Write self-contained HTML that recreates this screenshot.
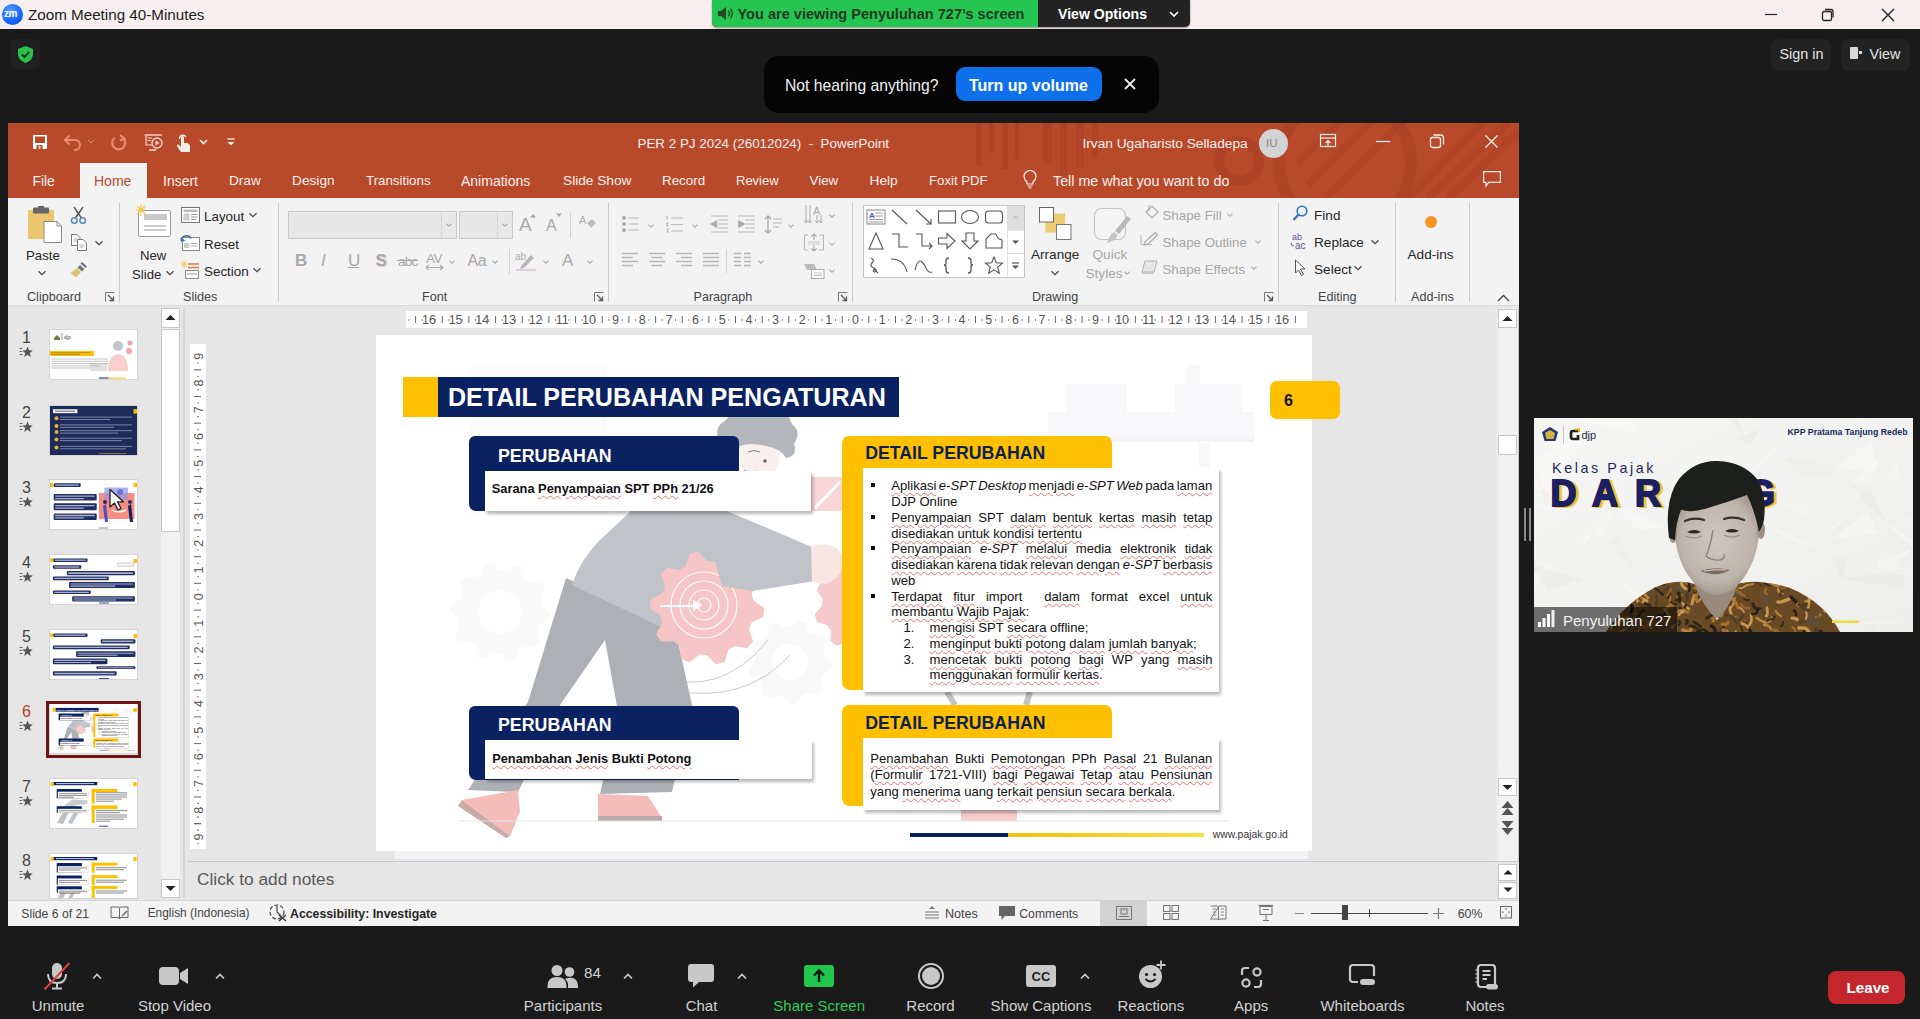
<!DOCTYPE html>
<html><head><meta charset="utf-8">
<style>
*{margin:0;padding:0;box-sizing:border-box}
html,body{width:1920px;height:1019px;overflow:hidden;background:#1a1a1a;font-family:"Liberation Sans",sans-serif}
.a{position:absolute}
.t{position:absolute;white-space:nowrap;line-height:1}
/* zoom title */
#ztitle{left:0;top:0;width:1920px;height:29px;background:#f7efef}
</style></head><body>
<div id="ztitle" class="a">
  <div class="a" style="left:2px;top:4px;width:21px;height:21px;border-radius:50%;background:radial-gradient(circle at 40% 30%,#4f9bff,#0b5cff 70%,#0a4fd6)"></div>
  <div class="t" style="left:4px;top:9px;font-size:10px;font-weight:bold;color:#fff;letter-spacing:-0.5px">zm</div>
  <div class="t" style="left:28px;top:7px;font-size:15.2px;color:#1b1b1b">Zoom Meeting 40-Minutes</div>
  <svg class="a" style="left:1760px;top:8px" width="22" height="14"><line x1="5" y1="6.5" x2="17" y2="6.5" stroke="#222" stroke-width="1.2"/></svg>
  <svg class="a" style="left:1820px;top:7px" width="16" height="16"><rect x="2.5" y="4.5" width="9" height="9" rx="1.5" fill="none" stroke="#222" stroke-width="1.3"/><path d="M5 2.5 h6 a2 2 0 0 1 2 2 v6" fill="none" stroke="#222" stroke-width="1.3"/></svg>
  <svg class="a" style="left:1880px;top:7px" width="16" height="16"><path d="M2 2 L14 14 M14 2 L2 14" stroke="#222" stroke-width="1.4"/></svg>
</div>
<div class="a" style="left:712px;top:0;width:478px;height:27px;border-radius:0 0 5px 5px;background:#232323;overflow:hidden;box-shadow:0 1px 2px rgba(0,0,0,.4)">
  <div class="a" style="left:0;top:0;width:326px;height:27px;background:#25c552"></div>
  <svg class="a" style="left:4px;top:5px" width="20" height="17"><path d="M2 6 h3 l5 -4 v13 l-5 -4 h-3z" fill="#204a1f"/><path d="M12.5 5.5 q2 3 0 6 M14.5 3.5 q3.5 5 0 10" fill="none" stroke="#204a1f" stroke-width="1.3"/></svg>
  <div class="t" style="left:25.5px;top:7px;font-size:14.55px;font-weight:bold;color:#1f3a1f">You are viewing Penyuluhan 727’s screen</div>
  <div class="t" style="left:346px;top:7px;font-size:14.1px;font-weight:bold;color:#fff">View Options</div>
  <svg class="a" style="left:456px;top:9px" width="12" height="10"><path d="M2 3 L6 7 L10 3" fill="none" stroke="#fff" stroke-width="1.6"/></svg>
</div>
<!-- shield -->
<div class="a" style="left:10px;top:39px;width:30px;height:30px;border-radius:6px;background:#202020"></div>
<svg class="a" style="left:16px;top:45px" width="19" height="19" viewBox="0 0 19 19"><path d="M9.5 1 L17 4 V9 C17 13.5 13.5 16.5 9.5 18 C5.5 16.5 2 13.5 2 9 V4 Z" fill="#2bc14e"/><path d="M5.8 9.5 L8.5 12 L13.2 6.8" fill="none" stroke="#0f3a17" stroke-width="2"/></svg>
<!-- sign in / view -->
<div class="a" style="left:1771px;top:39px;width:60px;height:32px;border-radius:7px;background:#222"></div>
<div class="t" style="left:1779.5px;top:47px;font-size:14.4px;color:#e6e6e6">Sign in</div>
<div class="a" style="left:1841px;top:39px;width:69px;height:32px;border-radius:7px;background:#222"></div>
<div class="a" style="left:1850px;top:47px;width:8px;height:12px;background:#d8d8d8;border-radius:1px"></div>
<div class="a" style="left:1859px;top:51px;width:3px;height:3px;background:#d8d8d8"></div>
<div class="t" style="left:1869.5px;top:47px;font-size:14.3px;color:#e6e6e6">View</div>
<!-- not hearing -->
<div class="a" style="left:764px;top:56px;width:395px;height:57px;border-radius:15px;background:#050505"></div>
<div class="t" style="left:785px;top:78px;font-size:15.7px;color:#f2f2f2">Not hearing anything?</div>
<div class="a" style="left:956px;top:67px;width:146px;height:34px;border-radius:9px;background:#0e71eb"></div>
<div class="t" style="left:969px;top:78px;font-size:16px;font-weight:bold;color:#fff">Turn up volume</div>
<svg class="a" style="left:1123px;top:77px" width="14" height="14"><path d="M2 2 L12 12 M12 2 L2 12" stroke="#eee" stroke-width="1.8"/></svg>

<!-- PPT window -->
<div class="a" style="left:8px;top:123px;width:1511px;height:803px;background:#e6e6e6"></div>
<div id="ptitle" class="a" style="left:8px;top:123px;width:1511px;height:75px;background:#b9492b;overflow:hidden">
<svg class="a" style="left:0;top:0" width="1511" height="75" viewBox="0 0 1511 75">
<g fill="#a83f24" opacity="0.5">
<rect x="968" y="0" width="6" height="42"/><rect x="981" y="0" width="5" height="30"/><rect x="994" y="0" width="6" height="46"/><rect x="1007" y="0" width="4" height="36"/>
<rect x="1035" y="0" width="9" height="40"/><rect x="1052" y="0" width="7" height="52"/><rect x="1068" y="0" width="8" height="44"/><rect x="1084" y="0" width="6" height="34"/>
</g>
<g fill="none" stroke="#a83f24" opacity="0.5">
<circle cx="1231" cy="38" r="20" stroke-width="10"/>
<circle cx="1337" cy="40" r="66" stroke-width="12"/>
</g>
<g stroke="#a83f24" opacity="0.4" stroke-width="8">
<path d="M1290 40 L1340 -10 M1300 62 L1372 -10 M1318 75 L1395 -2"/>
<path d="M1420 75 L1500 0 M1440 75 L1511 8 M1400 75 L1475 0"/>
</g>
</svg>

</div>
<div class="a" style="left:80px;top:163px;width:67px;height:35px;background:#f3f3f3"></div>
<!-- QAT -->
<svg class="a" style="left:32px;top:134px" width="16" height="16" viewBox="0 0 16 16"><rect x="1" y="1" width="14" height="14" rx="1" fill="#fff"/><rect x="3" y="2.5" width="10" height="6.5" fill="#b9492b"/><rect x="4.5" y="11" width="6" height="4" fill="#b9492b"/><rect x="6.5" y="11.5" width="2" height="3.5" fill="#f0c8b8"/></svg>
<svg class="a" style="left:63px;top:134px" width="36" height="18" viewBox="0 0 36 18"><path d="M3 6 H12 a5 5 0 0 1 0 10 H11" fill="none" stroke="#ec8a74" stroke-width="2"/><path d="M6.5 1.5 L2 6 L6.5 10.5" fill="none" stroke="#ec8a74" stroke-width="2"/><path d="M25 6 l3 3 l3 -3" fill="none" stroke="#e08a76" stroke-width="1"/></svg>
<svg class="a" style="left:110px;top:134px" width="18" height="18" viewBox="0 0 18 18"><path d="M13.5 4.5 A6.5 6.5 0 1 1 5 3.6" fill="none" stroke="#ec8a74" stroke-width="2.2"/><path d="M10 1 L14.5 4.5 L10 6.5" fill="none" stroke="#ec8a74" stroke-width="2"/></svg>
<svg class="a" style="left:144px;top:134px" width="20" height="18" viewBox="0 0 20 18"><path d="M0.5 1 H18" stroke="#f5d6cc" stroke-width="1.4"/><path d="M2 2 V11 H8" fill="none" stroke="#f5d6cc" stroke-width="1.2"/><path d="M3.5 4 H8 M3.5 6.5 H7" stroke="#f5d6cc" stroke-width="1"/><circle cx="13" cy="9" r="5" fill="none" stroke="#f5d6cc" stroke-width="1.3"/><path d="M11.5 6.5 L15.5 9 L11.5 11.5Z" fill="#f5d6cc"/><path d="M5 16 H12" stroke="#f5d6cc" stroke-width="1.6"/></svg>
<svg class="a" style="left:175px;top:133px" width="40" height="20" viewBox="0 0 40 20"><path d="M6 19 L2 13 Q1.5 11 3.5 11.5 L6 14 V5 Q6 3 7.5 3 Q9 3 9 5 V10 H12 Q15 10.5 15 13.5 V19Z" fill="#fbeee9"/><path d="M4.5 6 A3.5 3.5 0 0 1 11 4" fill="none" stroke="#fbeee9" stroke-width="1.3"/><path d="M25 7 l3.5 3.5 l3.5 -3.5" fill="none" stroke="#fbeee9" stroke-width="1.6"/></svg>
<svg class="a" style="left:226px;top:137px" width="10" height="10" viewBox="0 0 10 10"><path d="M1.5 2 H8.5" stroke="#fbeee9" stroke-width="1.3"/><path d="M1.5 5 L5 8.5 L8.5 5Z" fill="#fbeee9"/></svg>
<div class="t" style="left:637.5px;top:137px;font-size:13.4px;color:#fbf0ec;white-space:pre">PER 2 PJ 2024 (26012024)  -  PowerPoint</div>
<div class="t" style="left:1082.5px;top:137px;font-size:13.7px;color:#fbf0ec">Irvan Ugaharisto Selladepa</div>
<div class="a" style="left:1259px;top:129px;width:29px;height:29px;border-radius:50%;background:#d3d3d3"></div>
<div class="t" style="left:1266px;top:138px;font-size:11.5px;color:#8a8a8a">IU</div>
<svg class="a" style="left:1319px;top:133px" width="18" height="16" viewBox="0 0 18 16"><rect x="1.5" y="1.5" width="15" height="12" fill="none" stroke="#fbeee9" stroke-width="1.2"/><path d="M1.5 5 H16.5" stroke="#fbeee9" stroke-width="1.2"/><path d="M9 13 V7.5 M6.5 10 L9 7.5 L11.5 10" fill="none" stroke="#fbeee9" stroke-width="1.2"/></svg>
<svg class="a" style="left:1375px;top:135px" width="16" height="14"><path d="M1 6.5 H15" stroke="#fbeee9" stroke-width="1.3"/></svg>
<svg class="a" style="left:1429px;top:133px" width="16" height="16" viewBox="0 0 16 16"><rect x="1.5" y="4.5" width="10" height="10" rx="2" fill="none" stroke="#fbeee9" stroke-width="1.3"/><path d="M4.5 2 H11.5 a3 3 0 0 1 3 3 V11.5" fill="none" stroke="#fbeee9" stroke-width="1.3"/></svg>
<svg class="a" style="left:1484px;top:134px" width="15" height="15"><path d="M1.5 1.5 L13.5 13.5 M13.5 1.5 L1.5 13.5" stroke="#fbeee9" stroke-width="1.4"/></svg>
<!-- tabs -->
<div class="t" style="left:32.5px;top:174px;font-size:14px;color:#fbf0ec;letter-spacing:-0.1px">File</div>
<div class="t" style="left:94px;top:174px;font-size:14px;color:#b9492b">Home</div>
<div class="t" style="left:163px;top:174px;font-size:14px;color:#fbf0ec">Insert</div>
<div class="t" style="left:229px;top:174px;font-size:13.6px;color:#fbf0ec">Draw</div>
<div class="t" style="left:292px;top:174px;font-size:13.7px;color:#fbf0ec">Design</div>
<div class="t" style="left:366px;top:174px;font-size:13.3px;color:#fbf0ec">Transitions</div>
<div class="t" style="left:461px;top:174px;font-size:14px;color:#fbf0ec">Animations</div>
<div class="t" style="left:563px;top:174px;font-size:13.7px;color:#fbf0ec">Slide Show</div>
<div class="t" style="left:662px;top:174px;font-size:13.4px;color:#fbf0ec">Record</div>
<div class="t" style="left:736px;top:174px;font-size:13px;color:#fbf0ec">Review</div>
<div class="t" style="left:809.5px;top:174px;font-size:13.4px;color:#fbf0ec">View</div>
<div class="t" style="left:869.5px;top:174px;font-size:13.7px;color:#fbf0ec">Help</div>
<div class="t" style="left:929px;top:174px;font-size:13.2px;color:#fbf0ec">Foxit PDF</div>
<svg class="a" style="left:1022px;top:170px" width="16" height="20" viewBox="0 0 16 20"><path d="M5 14 V12 Q2 9.5 2 6.5 A6 6 0 0 1 14 6.5 Q14 9.5 11 12 V14 Z" fill="none" stroke="#fbeee9" stroke-width="1.2"/><path d="M5.5 16 H10.5 M6.5 18 H9.5" stroke="#fbeee9" stroke-width="1.2"/></svg>
<div class="t" style="left:1053px;top:174px;font-size:14.3px;color:#fbf0ec">Tell me what you want to do</div>
<svg class="a" style="left:1483px;top:171px" width="19" height="18" viewBox="0 0 19 18"><path d="M0.6 0.6 H17.4 V11.4 H5.5 L3 15 V11.4 H0.6Z" fill="none" stroke="#fbeee9" stroke-width="1.2"/></svg>

<div id="ribbon" class="a" style="left:8px;top:198px;width:1511px;height:108px;background:#f3f3f3;border-bottom:1px solid #dadada"></div>
<svg class="a" style="left:27px;top:206px;" width="36" height="38" viewBox="0 0 36 38"><rect x="1" y="4" width="26" height="29" fill="#ebc66f"/><rect x="6" y="1.5" width="16" height="6" rx="1" fill="#666"/><rect x="11" y="0" width="6" height="3" fill="#666"/><path d="M17 15.5 H30 L34.5 20 V36.5 H17Z" fill="#fff" stroke="#8a8a8a" stroke-width="1"/><path d="M30 15.5 V20 H34.5" fill="none" stroke="#8a8a8a" stroke-width="1"/></svg>
<div class="t" style="left:26.0px;top:248.8px;font-size:13.2px;color:#262626">Paste</div>
<svg class="a" style="left:36.5px;top:269px;" width="10" height="8" viewBox="0 0 10 8"><path d="M1.5 2.25 L5 5.75 L8.5 2.25" fill="none" stroke="#444" stroke-width="1.2"/></svg>
<svg class="a" style="left:70px;top:206px;" width="17" height="19" viewBox="0 0 17 19"><path d="M4 1 L11.5 12 M13 1 L5.5 12" stroke="#555" stroke-width="1.4"/><circle cx="4.3" cy="14.5" r="2.8" fill="none" stroke="#5b86c4" stroke-width="1.5"/><circle cx="12.7" cy="14.5" r="2.8" fill="none" stroke="#5b86c4" stroke-width="1.5"/></svg>
<svg class="a" style="left:70px;top:233px;" width="18" height="19" viewBox="0 0 18 19"><path d="M1.5 1.5 H7 L10 4.5 V12.5 H1.5Z" fill="#fff" stroke="#777" stroke-width="1"/><path d="M7.5 6.5 H13 L16.5 10 V17.5 H7.5Z" fill="#fff" stroke="#777" stroke-width="1"/><path d="M3.5 6 H7.5 M3.5 8 H7 M9.5 12 H14 M9.5 14 H14" stroke="#999" stroke-width=".8"/></svg>
<svg class="a" style="left:94px;top:239px;" width="10" height="8" viewBox="0 0 10 8"><path d="M1.5 2.25 L5 5.75 L8.5 2.25" fill="none" stroke="#444" stroke-width="1.2"/></svg>
<svg class="a" style="left:69px;top:260px;" width="20" height="19" viewBox="0 0 20 19"><path d="M13 2 L18 6.5 L16.5 8 L11.5 3.5Z" fill="#7a6a86"/><path d="M11 5 L15.5 9 L13 11.5 L8.5 7.5Z" fill="#777"/><path d="M8 8 L12 12 L7 17.5 L1.5 13Z" fill="#e0c26c"/></svg>
<div class="t" style="left:27.0px;top:291.0px;font-size:12.6px;color:#444">Clipboard</div>
<svg class="a" style="left:105px;top:292px;" width="10" height="10" viewBox="0 0 10 10"><path d="M0.5 0.5 H9.5 M0.5 0.5 V9.5" stroke="#777" stroke-width="1"/><path d="M3 3 L8.5 8.5 M4.5 8.5 H8.5 V4.5" fill="none" stroke="#555" stroke-width="1.3"/></svg>
<div class="a" style="left:119px;top:203px;width:1px;height:99px;background:#c9c9c9"></div>
<svg class="a" style="left:132px;top:204px;" width="42" height="34" viewBox="0 0 42 34"><rect x="6.5" y="6.5" width="32" height="26" rx="1.5" fill="#fff" stroke="#999" stroke-width="1"/><rect x="12" y="10" width="23" height="6" fill="#c8c8c8"/><path d="M12 22 H34 M12 26 H34" stroke="#9a9a9a" stroke-width="1"/><path d="M9 0.5 V12 M3.5 6 H14.5 M5 2 L13 10 M13 2 L5 10" stroke="#f2c84a" stroke-width="1.2"/></svg>
<div class="t" style="left:140.0px;top:248.8px;font-size:13.2px;color:#262626">New</div>
<div class="t" style="left:132.0px;top:267.8px;font-size:13.2px;color:#262626">Slide</div>
<svg class="a" style="left:165px;top:269px;" width="10" height="8" viewBox="0 0 10 8"><path d="M1.5 2.25 L5 5.75 L8.5 2.25" fill="none" stroke="#444" stroke-width="1.2"/></svg>
<svg class="a" style="left:181px;top:207px;" width="20" height="17" viewBox="0 0 20 17"><rect x="0.5" y="0.5" width="18" height="15" fill="#fff" stroke="#777" stroke-width="1"/><rect x="2.5" y="2.5" width="14" height="2.5" fill="#bbb"/><rect x="2.5" y="6.5" width="6" height="7" fill="#ccc"/><path d="M10 7.5 H16.5 M10 10 H16.5 M10 12.5 H15" stroke="#999" stroke-width="1"/></svg>
<div class="t" style="left:204.0px;top:209.7px;font-size:13.4px;color:#262626">Layout</div>
<svg class="a" style="left:248px;top:211px;" width="10" height="8" viewBox="0 0 10 8"><path d="M1.5 2.25 L5 5.75 L8.5 2.25" fill="none" stroke="#444" stroke-width="1.2"/></svg>
<svg class="a" style="left:180px;top:234px;" width="21" height="17" viewBox="0 0 21 17"><rect x="2.5" y="3.5" width="17" height="13" fill="#fff" stroke="#888" stroke-width="1"/><rect x="4" y="9" width="5" height="5" fill="#ccc"/><path d="M10.5 9.5 H17.5 M10.5 12 H17.5" stroke="#aaa" stroke-width="1"/><path d="M1.5 7 A5 4.5 0 0 1 11 4.5" fill="none" stroke="#3d6ab0" stroke-width="1.6"/><path d="M0.5 3.5 L1.5 8 L5.5 6.5Z" fill="#3d6ab0"/></svg>
<div class="t" style="left:204.0px;top:237.5px;font-size:13.4px;color:#262626">Reset</div>
<svg class="a" style="left:180px;top:260px;" width="21" height="20" viewBox="0 0 21 20"><path d="M4 0.5 V8 M0.5 4 H7.5 M1.5 1.5 L6.5 6.5 M6.5 1.5 L1.5 6.5" stroke="#f2c84a" stroke-width="1"/><path d="M8 4 H19 M8 7.5 H19" stroke="#e07a3a" stroke-width="1.3"/><rect x="5.5" y="10.5" width="13" height="8" fill="#fff" stroke="#888" stroke-width="1"/><path d="M7 14 H17" stroke="#999" stroke-width="1"/></svg>
<div class="t" style="left:204.0px;top:265.2px;font-size:13.4px;color:#262626">Section</div>
<svg class="a" style="left:252px;top:266px;" width="10" height="8" viewBox="0 0 10 8"><path d="M1.5 2.25 L5 5.75 L8.5 2.25" fill="none" stroke="#444" stroke-width="1.2"/></svg>
<div class="t" style="left:183.0px;top:291.0px;font-size:12.6px;color:#444">Slides</div>
<div class="a" style="left:278px;top:203px;width:1px;height:99px;background:#c9c9c9"></div>
<div class="a" style="left:288px;top:211px;width:169px;height:28px;background:#e8e8e8;border:1px solid #c8c8c8"></div>
<div class="a" style="left:441px;top:212px;width:1px;height:26px;background:#d6d6d6"></div>
<svg class="a" style="left:444px;top:221px;" width="10" height="8" viewBox="0 0 10 8"><path d="M2.5 2.75 L5 5.25 L7.5 2.75" fill="none" stroke="#b0b0b0" stroke-width="1.2"/></svg>
<div class="a" style="left:459px;top:211px;width:54px;height:28px;background:#e8e8e8;border:1px solid #c8c8c8"></div>
<div class="a" style="left:497px;top:212px;width:1px;height:26px;background:#d6d6d6"></div>
<svg class="a" style="left:500px;top:221px;" width="10" height="8" viewBox="0 0 10 8"><path d="M2.5 2.75 L5 5.25 L7.5 2.75" fill="none" stroke="#b0b0b0" stroke-width="1.2"/></svg>
<div class="t" style="left:519.0px;top:215.4px;font-size:19px;color:#a8a8a8">A</div>
<svg class="a" style="left:529px;top:213px;" width="8" height="5" viewBox="0 0 8 5"><path d="M1 4.5 L4 1 L7 4.5Z" fill="#a8a8a8"/></svg>
<div class="t" style="left:546.0px;top:218.0px;font-size:16px;color:#a8a8a8">A</div>
<svg class="a" style="left:555px;top:213px;" width="8" height="5" viewBox="0 0 8 5"><path d="M1 0.5 L4 4 L7 0.5Z" fill="#a8a8a8"/></svg>
<div class="a" style="left:570px;top:213px;width:1px;height:25px;background:#d0d0d0"></div>
<svg class="a" style="left:579px;top:214px;" width="18" height="17" viewBox="0 0 18 17"><text x="0" y="10" font-size="11" font-family="Liberation Sans" fill="#aaa">A</text><path d="M8 9 L13 5 L17 9 L12 14Z" fill="#bdbdbd"/></svg>
<div class="t" style="left:295.0px;top:251.6px;font-size:17px;color:#a8a8a8;font-weight:bold">B</div>
<div class="t" style="left:321.0px;top:251.6px;font-size:17px;color:#a8a8a8;font-style:italic">I</div>
<div class="t" style="left:348.0px;top:251.6px;font-size:17px;color:#a8a8a8">U</div>
<div class="a" style="left:348px;top:267px;width:11px;height:1.3px;background:#a8a8a8"></div>
<div class="t" style="left:375.5px;top:251.6px;font-size:17px;color:#a8a8a8;font-weight:bold;text-shadow:1px 1px 1px #ccc">S</div>
<div class="t" style="left:398.0px;top:254.6px;font-size:13.5px;color:#a8a8a8;letter-spacing:-0.8px">abc</div>
<div class="a" style="left:397px;top:260px;width:21px;height:1px;background:#a8a8a8"></div>
<div class="t" style="left:426.0px;top:251.6px;font-size:13.5px;color:#a8a8a8;letter-spacing:-0.5px">AV</div>
<svg class="a" style="left:425px;top:264px;" width="19" height="7" viewBox="0 0 19 7"><path d="M1 3.5 H18 M4 1 L1 3.5 L4 6 M15 1 L18 3.5 L15 6" fill="none" stroke="#a8a8a8" stroke-width="1.1"/></svg>
<svg class="a" style="left:447px;top:258px;" width="10" height="8" viewBox="0 0 10 8"><path d="M2.5 2.75 L5 5.25 L7.5 2.75" fill="none" stroke="#b0b0b0" stroke-width="1.1"/></svg>
<div class="t" style="left:467.5px;top:252.5px;font-size:16px;color:#a8a8a8;letter-spacing:-0.5px">Aa</div>
<svg class="a" style="left:490px;top:258px;" width="10" height="8" viewBox="0 0 10 8"><path d="M2.5 2.75 L5 5.25 L7.5 2.75" fill="none" stroke="#b0b0b0" stroke-width="1.1"/></svg>
<div class="a" style="left:509px;top:249px;width:1px;height:25px;background:#d0d0d0"></div>
<svg class="a" style="left:515px;top:251px;" width="23" height="20" viewBox="0 0 23 20"><text x="0" y="9" font-size="10" font-family="Liberation Sans" fill="#aaa">ab</text><path d="M6 15 L16 4 L19 7 L9 17 L5 18Z" fill="#b8b8b8"/><rect x="1" y="18" width="20" height="2" fill="#dcd0dc"/></svg>
<svg class="a" style="left:540.5px;top:258px;" width="10" height="8" viewBox="0 0 10 8"><path d="M2.5 2.75 L5 5.25 L7.5 2.75" fill="none" stroke="#b0b0b0" stroke-width="1.1"/></svg>
<div class="t" style="left:562.0px;top:251.6px;font-size:17px;color:#a8a8a8">A</div>
<svg class="a" style="left:585px;top:258px;" width="10" height="8" viewBox="0 0 10 8"><path d="M2.5 2.75 L5 5.25 L7.5 2.75" fill="none" stroke="#b0b0b0" stroke-width="1.1"/></svg>
<div class="t" style="left:422.0px;top:291.2px;font-size:12.6px;color:#444">Font</div>
<svg class="a" style="left:594px;top:292px;" width="10" height="10" viewBox="0 0 10 10"><path d="M0.5 0.5 H9.5 M0.5 0.5 V9.5" stroke="#777" stroke-width="1"/><path d="M3 3 L8.5 8.5 M4.5 8.5 H8.5 V4.5" fill="none" stroke="#555" stroke-width="1.3"/></svg>
<div class="a" style="left:608px;top:203px;width:1px;height:99px;background:#c9c9c9"></div>
<svg class="a" style="left:621px;top:215px;" width="20" height="18" viewBox="0 0 20 18"><circle cx="3" cy="3" r="2" fill="#aaa"/><circle cx="3" cy="9" r="2" fill="#aaa"/><circle cx="3" cy="15" r="2" fill="#aaa"/><path d="M7 3 H18 M7 9 H18 M7 15 H18" stroke="#b8b8b8" stroke-width="1.2"/></svg>
<svg class="a" style="left:646px;top:221.5px;" width="10" height="8" viewBox="0 0 10 8"><path d="M2.5 2.75 L5 5.25 L7.5 2.75" fill="none" stroke="#b0b0b0" stroke-width="1.1"/></svg>
<svg class="a" style="left:665px;top:215px;" width="20" height="18" viewBox="0 0 20 18"><path d="M2 1 V5 M1.5 8 H3 L1.5 11 H3.5 M1.5 14 H3.5 L2 15.5 L3.5 17 H1.5" fill="none" stroke="#aaa" stroke-width="1"/><path d="M6 3 H18 M6 9.5 H18 M6 16 H18" stroke="#b8b8b8" stroke-width="1.2"/></svg>
<svg class="a" style="left:690px;top:221.5px;" width="10" height="8" viewBox="0 0 10 8"><path d="M2.5 2.75 L5 5.25 L7.5 2.75" fill="none" stroke="#b0b0b0" stroke-width="1.1"/></svg>
<svg class="a" style="left:710px;top:215px;" width="19" height="18" viewBox="0 0 19 18"><path d="M1 1 H18 M8 5 H18 M8 9 H18 M8 13 H18 M1 17 H18" stroke="#b8b8b8" stroke-width="1.2"/><path d="M6.5 6 L1.5 9 L6.5 12Z M3 9 H7" fill="#aaa" stroke="#aaa" stroke-width="1.4"/></svg>
<svg class="a" style="left:737px;top:215px;" width="19" height="18" viewBox="0 0 19 18"><path d="M1 1 H18 M8 5 H18 M8 9 H18 M8 13 H18 M1 17 H18" stroke="#b8b8b8" stroke-width="1.2"/><path d="M2 6 L7 9 L2 12Z M1 9 H5" fill="#aaa" stroke="#aaa" stroke-width="1.4"/></svg>
<svg class="a" style="left:764px;top:215px;" width="19" height="19" viewBox="0 0 19 19"><path d="M4 1 V18 M1 4 L4 1 L7 4 M1 15 L4 18 L7 15" fill="none" stroke="#aaa" stroke-width="1.3"/><path d="M9 4 H18 M9 8 H18 M9 12 H15" stroke="#b8b8b8" stroke-width="1.2"/></svg>
<svg class="a" style="left:786px;top:221.5px;" width="10" height="8" viewBox="0 0 10 8"><path d="M2.5 2.75 L5 5.25 L7.5 2.75" fill="none" stroke="#b0b0b0" stroke-width="1.1"/></svg>
<svg class="a" style="left:804px;top:205px;" width="21" height="20" viewBox="0 0 21 20"><text x="9" y="10" font-size="11" font-family="Liberation Sans" fill="#aaa">A</text><path d="M2 0 V18 M0 15.5 L2 18 L4 15.5 M6 0 V18 M4 15.5 L6 18 L8 15.5 M13 10 V18 M11 15.5 L13 18 L15 15.5 M17 10 V18 M15 15.5 L17 18 L19 15.5" fill="none" stroke="#aaa" stroke-width="1"/></svg>
<svg class="a" style="left:827px;top:211.7px;" width="10" height="8" viewBox="0 0 10 8"><path d="M2.5 2.75 L5 5.25 L7.5 2.75" fill="none" stroke="#b0b0b0" stroke-width="1.1"/></svg>
<svg class="a" style="left:804px;top:233px;" width="21" height="20" viewBox="0 0 21 20"><path d="M0.5 2 H4 M15 2 H19.5 V17 H15 M4 17 H0.5 V2" fill="none" stroke="#b4b4b4" stroke-width="1"/><path d="M10 1 V7 M7.5 3.5 L10 1 L12.5 3.5 M10 18 V12 M7.5 15.5 L10 18 L12.5 15.5" fill="none" stroke="#aaa" stroke-width="1.1"/><path d="M4 9 H16 M4 11 H16" stroke="#c8c8c8" stroke-width="1"/></svg>
<svg class="a" style="left:827px;top:239.8px;" width="10" height="8" viewBox="0 0 10 8"><path d="M2.5 2.75 L5 5.25 L7.5 2.75" fill="none" stroke="#b0b0b0" stroke-width="1.1"/></svg>
<svg class="a" style="left:804px;top:263px;" width="21" height="16" viewBox="0 0 21 16"><path d="M0 1 H10 L13 7 L3 7 Z" fill="#bbb"/><rect x="7.5" y="6.5" width="12.5" height="9" fill="#fff" stroke="#aaa" stroke-width="1"/><path d="M10 10 H18 M10 12.5 H18" stroke="#bbb" stroke-width="1"/></svg>
<svg class="a" style="left:827px;top:267px;" width="10" height="8" viewBox="0 0 10 8"><path d="M2.5 2.75 L5 5.25 L7.5 2.75" fill="none" stroke="#b0b0b0" stroke-width="1.1"/></svg>
<svg class="a" style="left:622px;top:252px;" width="17" height="16" viewBox="0 0 17 16"><path d="M0 1.5 H16" stroke="#b4b4b4" stroke-width="1.4"/><path d="M0 5.5 H11" stroke="#b4b4b4" stroke-width="1.4"/><path d="M0 9.5 H16" stroke="#b4b4b4" stroke-width="1.4"/><path d="M0 13.5 H11" stroke="#b4b4b4" stroke-width="1.4"/></svg>
<svg class="a" style="left:649px;top:252px;" width="17" height="16" viewBox="0 0 17 16"><path d="M0.0 1.5 H16.0" stroke="#b4b4b4" stroke-width="1.4"/><path d="M2.5 5.5 H13.5" stroke="#b4b4b4" stroke-width="1.4"/><path d="M0.0 9.5 H16.0" stroke="#b4b4b4" stroke-width="1.4"/><path d="M2.5 13.5 H13.5" stroke="#b4b4b4" stroke-width="1.4"/></svg>
<svg class="a" style="left:676px;top:252px;" width="17" height="16" viewBox="0 0 17 16"><path d="M0 1.5 H16" stroke="#b4b4b4" stroke-width="1.4"/><path d="M5 5.5 H16" stroke="#b4b4b4" stroke-width="1.4"/><path d="M0 9.5 H16" stroke="#b4b4b4" stroke-width="1.4"/><path d="M5 13.5 H16" stroke="#b4b4b4" stroke-width="1.4"/></svg>
<svg class="a" style="left:703px;top:252px;" width="17" height="16" viewBox="0 0 17 16"><path d="M0 1.5 H16" stroke="#b4b4b4" stroke-width="1.4"/><path d="M0 5.5 H16" stroke="#b4b4b4" stroke-width="1.4"/><path d="M0 9.5 H16" stroke="#b4b4b4" stroke-width="1.4"/><path d="M0 13.5 H16" stroke="#b4b4b4" stroke-width="1.4"/></svg>
<div class="a" style="left:726px;top:249px;width:1px;height:24px;background:#d0d0d0"></div>
<svg class="a" style="left:734px;top:252px;" width="17" height="16" viewBox="0 0 17 16"><path d="M0 1.5 H7 M10 1.5 H17" stroke="#b4b4b4" stroke-width="1.3"/><path d="M0 5.5 H7 M10 5.5 H17" stroke="#b4b4b4" stroke-width="1.3"/><path d="M0 9.5 H7 M10 9.5 H17" stroke="#b4b4b4" stroke-width="1.3"/><path d="M0 13.5 H7 M10 13.5 H17" stroke="#b4b4b4" stroke-width="1.3"/></svg>
<svg class="a" style="left:755.5px;top:257.5px;" width="10" height="8" viewBox="0 0 10 8"><path d="M2.5 2.75 L5 5.25 L7.5 2.75" fill="none" stroke="#b0b0b0" stroke-width="1.1"/></svg>
<div class="t" style="left:693.5px;top:290.8px;font-size:12.6px;color:#444">Paragraph</div>
<svg class="a" style="left:838px;top:292px;" width="10" height="10" viewBox="0 0 10 10"><path d="M0.5 0.5 H9.5 M0.5 0.5 V9.5" stroke="#777" stroke-width="1"/><path d="M3 3 L8.5 8.5 M4.5 8.5 H8.5 V4.5" fill="none" stroke="#555" stroke-width="1.3"/></svg>
<div class="a" style="left:852px;top:203px;width:1px;height:99px;background:#c9c9c9"></div>
<div class="a" style="left:863px;top:205px;width:162px;height:73px;background:#fff;border:1px solid #c6c6c6"></div>
<div class="a" style="left:1007px;top:206px;width:17px;height:25px;background:#dedede"></div>
<div class="a" style="left:1007px;top:206px;width:1px;height:71px;background:#e0e0e0"></div>
<div class="a" style="left:1008px;top:253px;width:16px;height:1px;background:#e0e0e0"></div>
<div class="a" style="left:1008px;top:230px;width:16px;height:1px;background:#e6e6e6"></div>
<svg class="a" style="left:1011px;top:214px;" width="9" height="5" viewBox="0 0 9 5"><path d="M1 4.5 L4.5 1 L8 4.5Z" fill="#c8c8c8"/></svg>
<svg class="a" style="left:1011px;top:240px;" width="9" height="5" viewBox="0 0 9 5"><path d="M1 0.5 L4.5 4 L8 0.5Z" fill="#555"/></svg>
<svg class="a" style="left:1011px;top:262px;" width="9" height="8" viewBox="0 0 9 8"><path d="M1 1 H8" stroke="#555" stroke-width="1.2"/><path d="M1 3.5 L4.5 7 L8 3.5Z" fill="#555"/></svg>
<svg class="a" style="left:866px;top:208px;" width="20" height="18" viewBox="0 0 20 18"><rect x="1" y="2" width="18" height="14" fill="#fff" stroke="#888" stroke-width="1"/><text x="3" y="10" font-size="8" font-weight="bold" font-family="Liberation Sans" fill="#3d5ea8">A</text><path d="M9 5 H17 M9 8 H17 M3 11.5 H17 M3 14 H17" stroke="#999" stroke-width=".9"/></svg>
<svg class="a" style="left:890px;top:208px;" width="20" height="18" viewBox="0 0 20 18"><path d="M2 2 L17 16" stroke="#555" stroke-width="1.1"/></svg>
<svg class="a" style="left:914px;top:208px;" width="20" height="18" viewBox="0 0 20 18"><path d="M2 2 L17 16" stroke="#555" stroke-width="1.1"/><path d="M17 11 V16 H12" fill="none" stroke="#555" stroke-width="1.1"/></svg>
<svg class="a" style="left:937px;top:208px;" width="20" height="18" viewBox="0 0 20 18"><rect x="1.5" y="3" width="17" height="12" fill="none" stroke="#555" stroke-width="1.1"/></svg>
<svg class="a" style="left:960px;top:208px;" width="20" height="18" viewBox="0 0 20 18"><ellipse cx="10" cy="9" rx="8.5" ry="6.5" fill="none" stroke="#555" stroke-width="1.1"/></svg>
<svg class="a" style="left:984px;top:208px;" width="20" height="18" viewBox="0 0 20 18"><rect x="1.5" y="3" width="17" height="12" rx="3" fill="none" stroke="#555" stroke-width="1.1"/></svg>
<svg class="a" style="left:866px;top:232px;" width="20" height="18" viewBox="0 0 20 18"><path d="M10 1 L17 17 H3Z" fill="none" stroke="#555" stroke-width="1.1"/></svg>
<svg class="a" style="left:890px;top:232px;" width="20" height="18" viewBox="0 0 20 18"><path d="M2 2 H9 V15 H18" fill="none" stroke="#555" stroke-width="1.1"/></svg>
<svg class="a" style="left:914px;top:232px;" width="20" height="18" viewBox="0 0 20 18"><path d="M2 2 H8 V14 H18 M15 11 L18 14 L15 17" fill="none" stroke="#555" stroke-width="1.1"/></svg>
<svg class="a" style="left:937px;top:232px;" width="20" height="18" viewBox="0 0 20 18"><path d="M1.5 6 H10 V1.5 L18 9 L10 16.5 V12 H1.5Z" fill="none" stroke="#555" stroke-width="1.1"/></svg>
<svg class="a" style="left:960px;top:232px;" width="20" height="18" viewBox="0 0 20 18"><path d="M6 1 H14 V9 H18 L10 17 L2 9 H6Z" fill="none" stroke="#555" stroke-width="1.1"/></svg>
<svg class="a" style="left:984px;top:232px;" width="20" height="18" viewBox="0 0 20 18"><path d="M2 16 V7 L7 2 H12 Q13 7 18 8 V16Z" fill="none" stroke="#555" stroke-width="1.1"/></svg>
<svg class="a" style="left:866px;top:256px;" width="20" height="18" viewBox="0 0 20 18"><path d="M5 2 Q9 4 6 7 Q3 10 8 12 Q12 14 9 16 Q6 16 8 13 L12 17" fill="none" stroke="#555" stroke-width="1.1"/></svg>
<svg class="a" style="left:890px;top:256px;" width="20" height="18" viewBox="0 0 20 18"><path d="M1 3 Q14 3 17 16" fill="none" stroke="#555" stroke-width="1.1"/></svg>
<svg class="a" style="left:914px;top:256px;" width="20" height="18" viewBox="0 0 20 18"><path d="M1 14 Q4 2 8 6 Q11 9 13 14 Q15 17 18 16" fill="none" stroke="#555" stroke-width="1.1"/></svg>
<svg class="a" style="left:937px;top:256px;" width="20" height="18" viewBox="0 0 20 18"><path d="M12 2 Q9 2 9 5 V8 Q9 9 7 9 Q9 9 9 11 V14 Q9 17 12 17" fill="none" stroke="#555" stroke-width="1.3"/></svg>
<svg class="a" style="left:960px;top:256px;" width="20" height="18" viewBox="0 0 20 18"><path d="M8 2 Q11 2 11 5 V8 Q11 9 13 9 Q11 9 11 11 V14 Q11 17 8 17" fill="none" stroke="#555" stroke-width="1.3"/></svg>
<svg class="a" style="left:984px;top:256px;" width="20" height="18" viewBox="0 0 20 18"><path d="M10 1 L12.3 6.8 L18.5 7.2 L13.7 11.1 L15.3 17.2 L10 13.8 L4.7 17.2 L6.3 11.1 L1.5 7.2 L7.7 6.8Z" fill="none" stroke="#555" stroke-width="1.1"/></svg>
<svg class="a" style="left:1038px;top:206px;" width="34" height="35" viewBox="0 0 34 35"><rect x="7.3" y="7.5" width="19.7" height="19" fill="#eccb72"/><rect x="1.5" y="1.5" width="14" height="14.5" fill="#fff" stroke="#666" stroke-width="1"/><rect x="18.5" y="18.5" width="14.5" height="15" fill="#fff" stroke="#777" stroke-width="1"/></svg>
<div class="t" style="left:1031.0px;top:247.9px;font-size:13.6px;color:#262626">Arrange</div>
<svg class="a" style="left:1050px;top:268.6px;" width="10" height="8" viewBox="0 0 10 8"><path d="M1.5 2.25 L5 5.75 L8.5 2.25" fill="none" stroke="#444" stroke-width="1.2"/></svg>
<svg class="a" style="left:1093px;top:207px;" width="40" height="38" viewBox="0 0 40 38"><rect x="1.5" y="1.5" width="31" height="31" rx="7" fill="#f4f4f4" stroke="#c4c4c4" stroke-width="1.1"/><path d="M38 12 L34 9 L22 24 L26 27Z" fill="#b8b8b8"/><path d="M21 25 Q16 28 14 36 Q22 34 25 28Z" fill="#c4c4c4"/></svg>
<div class="t" style="left:1092.5px;top:247.9px;font-size:13.6px;color:#a6a6a6">Quick</div>
<div class="t" style="left:1085.5px;top:266.9px;font-size:13.6px;color:#a6a6a6">Styles</div>
<svg class="a" style="left:1122px;top:269px;" width="10" height="8" viewBox="0 0 10 8"><path d="M2.5 2.75 L5 5.25 L7.5 2.75" fill="none" stroke="#b0b0b0" stroke-width="1.1"/></svg>
<svg class="a" style="left:1143px;top:204px;" width="16" height="17" viewBox="0 0 16 17"><path d="M3 8 L9 2 L15 8 L9 14Z" fill="none" stroke="#aaa" stroke-width="1.2"/><path d="M6 1 V7" stroke="#aaa" stroke-width="1"/></svg>
<div class="t" style="left:1162.5px;top:209.1px;font-size:13.3px;color:#a6a6a6">Shape Fill</div>
<svg class="a" style="left:1224.5px;top:211.3px;" width="10" height="8" viewBox="0 0 10 8"><path d="M2.5 2.75 L5 5.25 L7.5 2.75" fill="none" stroke="#b0b0b0" stroke-width="1.1"/></svg>
<svg class="a" style="left:1140px;top:231px;" width="19" height="15" viewBox="0 0 19 15"><path d="M1 4 V13.5 H12" fill="none" stroke="#b0b0b0" stroke-width="1"/><path d="M5 11 L15 1.5 L17.5 4 L7.5 13.5 L4.5 14Z" fill="none" stroke="#aaa" stroke-width="1.2"/></svg>
<div class="t" style="left:1162.5px;top:235.9px;font-size:13.3px;color:#a6a6a6">Shape Outline</div>
<svg class="a" style="left:1253px;top:238px;" width="10" height="8" viewBox="0 0 10 8"><path d="M2.5 2.75 L5 5.25 L7.5 2.75" fill="none" stroke="#b0b0b0" stroke-width="1.1"/></svg>
<svg class="a" style="left:1140px;top:259px;" width="19" height="17" viewBox="0 0 19 17"><path d="M5 2 H17 L14 13 H2Z" fill="#e6e6e6" stroke="#b0b0b0" stroke-width="1"/><path d="M2 13 L1 15 H13 L14 13" fill="#c8c8c8"/></svg>
<div class="t" style="left:1162.5px;top:262.5px;font-size:13.3px;color:#a6a6a6">Shape Effects</div>
<svg class="a" style="left:1249px;top:264px;" width="10" height="8" viewBox="0 0 10 8"><path d="M2.5 2.75 L5 5.25 L7.5 2.75" fill="none" stroke="#b0b0b0" stroke-width="1.1"/></svg>
<div class="t" style="left:1032.0px;top:290.6px;font-size:12.6px;color:#444">Drawing</div>
<svg class="a" style="left:1264px;top:292px;" width="10" height="10" viewBox="0 0 10 10"><path d="M0.5 0.5 H9.5 M0.5 0.5 V9.5" stroke="#777" stroke-width="1"/><path d="M3 3 L8.5 8.5 M4.5 8.5 H8.5 V4.5" fill="none" stroke="#555" stroke-width="1.3"/></svg>
<div class="a" style="left:1278px;top:203px;width:1px;height:99px;background:#c9c9c9"></div>
<svg class="a" style="left:1292px;top:205px;" width="16" height="17" viewBox="0 0 16 17"><circle cx="10" cy="6" r="4.8" fill="none" stroke="#2f6fc4" stroke-width="1.6"/><path d="M6.5 9.5 L1.5 15" stroke="#2f6fc4" stroke-width="2.2"/></svg>
<div class="t" style="left:1314.0px;top:209.3px;font-size:13.6px;color:#262626">Find</div>
<svg class="a" style="left:1290px;top:232px;" width="20" height="18" viewBox="0 0 20 18"><text x="2" y="8" font-size="9" font-family="Liberation Sans" fill="#6a4f94">ab</text><text x="5" y="17" font-size="10" font-family="Liberation Sans" fill="#6a4f94">ac</text><path d="M1 11 Q1 14 4 14" fill="none" stroke="#2f6fc4" stroke-width="1"/></svg>
<div class="t" style="left:1314.0px;top:235.7px;font-size:13.6px;color:#262626">Replace</div>
<svg class="a" style="left:1370px;top:238px;" width="10" height="8" viewBox="0 0 10 8"><path d="M1.5 2.25 L5 5.75 L8.5 2.25" fill="none" stroke="#444" stroke-width="1.2"/></svg>
<svg class="a" style="left:1294px;top:259px;" width="13" height="18" viewBox="0 0 13 18"><path d="M1.5 1 V14 L4.5 11 L7.5 16.5 L9.5 15.5 L6.5 10 H11Z" fill="#fff" stroke="#555" stroke-width="1"/></svg>
<div class="t" style="left:1314.0px;top:262.7px;font-size:13.6px;color:#262626">Select</div>
<svg class="a" style="left:1352.5px;top:264px;" width="10" height="8" viewBox="0 0 10 8"><path d="M1.5 2.25 L5 5.75 L8.5 2.25" fill="none" stroke="#444" stroke-width="1.2"/></svg>
<div class="t" style="left:1318.0px;top:290.9px;font-size:12.6px;color:#444">Editing</div>
<div class="a" style="left:1395px;top:203px;width:1px;height:99px;background:#c9c9c9"></div>
<div class="a" style="left:1425px;top:216px;width:12px;height:12px;border-radius:50%;background:#f7941d"></div>
<div class="t" style="left:1407.5px;top:247.9px;font-size:13.6px;color:#262626">Add-ins</div>
<div class="t" style="left:1411.0px;top:290.9px;font-size:12.6px;color:#444">Add-ins</div>
<div class="a" style="left:1469px;top:203px;width:1px;height:99px;background:#c9c9c9"></div>
<svg class="a" style="left:1497px;top:294px;" width="13" height="8" viewBox="0 0 13 8"><path d="M1 7 L6.5 1.5 L12 7" fill="none" stroke="#444" stroke-width="1.3"/></svg>
<!-- content -->
<div class="a" style="left:161px;top:308px;width:19px;height:590px;background:#f0f0f0"></div>
<div class="a" style="left:161px;top:308px;width:19px;height:20px;background:#fff;border:1px solid #c6c6c6"></div>
<svg class="a" style="left:165px;top:314px;" width="11" height="7" viewBox="0 0 11 7"><path d="M0.5 6 L5.5 1 L10.5 6Z" fill="#222"/></svg>
<div class="a" style="left:161px;top:329px;width:19px;height:203px;background:#fff;border:1px solid #c6c6c6"></div>
<div class="a" style="left:161px;top:879px;width:19px;height:19px;background:#fff;border:1px solid #c6c6c6"></div>
<svg class="a" style="left:165px;top:885px;" width="11" height="7" viewBox="0 0 11 7"><path d="M0.5 1 L5.5 6 L10.5 1Z" fill="#222"/></svg>
<div class="a" style="left:183px;top:308px;width:2px;height:590px;background:#d6d6d6"></div>
<div class="t" style="left:22.0px;top:330.0px;font-size:16px;color:#444">1</div>
<svg class="a" style="left:19px;top:346px;" width="14" height="12" viewBox="0 0 14 12"><path d="M8.5 0.5 L10 4.3 L13.8 4.5 L10.8 7 L11.8 11 L8.5 8.8 L5.2 11 L6.2 7 L3.2 4.5 L7 4.3Z" fill="#555"/><path d="M0.5 2.5 H3.5 M0.5 5.5 H3 M0.5 8.5 H3.5" stroke="#666" stroke-width="1"/></svg>
<div class="t" style="left:22.0px;top:405.0px;font-size:16px;color:#444">2</div>
<svg class="a" style="left:19px;top:421px;" width="14" height="12" viewBox="0 0 14 12"><path d="M8.5 0.5 L10 4.3 L13.8 4.5 L10.8 7 L11.8 11 L8.5 8.8 L5.2 11 L6.2 7 L3.2 4.5 L7 4.3Z" fill="#555"/><path d="M0.5 2.5 H3.5 M0.5 5.5 H3 M0.5 8.5 H3.5" stroke="#666" stroke-width="1"/></svg>
<div class="t" style="left:22.0px;top:480.0px;font-size:16px;color:#444">3</div>
<svg class="a" style="left:19px;top:496px;" width="14" height="12" viewBox="0 0 14 12"><path d="M8.5 0.5 L10 4.3 L13.8 4.5 L10.8 7 L11.8 11 L8.5 8.8 L5.2 11 L6.2 7 L3.2 4.5 L7 4.3Z" fill="#555"/><path d="M0.5 2.5 H3.5 M0.5 5.5 H3 M0.5 8.5 H3.5" stroke="#666" stroke-width="1"/></svg>
<div class="t" style="left:22.0px;top:554.5px;font-size:16px;color:#444">4</div>
<svg class="a" style="left:19px;top:571px;" width="14" height="12" viewBox="0 0 14 12"><path d="M8.5 0.5 L10 4.3 L13.8 4.5 L10.8 7 L11.8 11 L8.5 8.8 L5.2 11 L6.2 7 L3.2 4.5 L7 4.3Z" fill="#555"/><path d="M0.5 2.5 H3.5 M0.5 5.5 H3 M0.5 8.5 H3.5" stroke="#666" stroke-width="1"/></svg>
<div class="t" style="left:22.0px;top:629.0px;font-size:16px;color:#444">5</div>
<svg class="a" style="left:19px;top:645px;" width="14" height="12" viewBox="0 0 14 12"><path d="M8.5 0.5 L10 4.3 L13.8 4.5 L10.8 7 L11.8 11 L8.5 8.8 L5.2 11 L6.2 7 L3.2 4.5 L7 4.3Z" fill="#555"/><path d="M0.5 2.5 H3.5 M0.5 5.5 H3 M0.5 8.5 H3.5" stroke="#666" stroke-width="1"/></svg>
<div class="t" style="left:22.0px;top:703.5px;font-size:16px;color:#c0392b">6</div>
<svg class="a" style="left:19px;top:720px;" width="14" height="12" viewBox="0 0 14 12"><path d="M8.5 0.5 L10 4.3 L13.8 4.5 L10.8 7 L11.8 11 L8.5 8.8 L5.2 11 L6.2 7 L3.2 4.5 L7 4.3Z" fill="#555"/><path d="M0.5 2.5 H3.5 M0.5 5.5 H3 M0.5 8.5 H3.5" stroke="#666" stroke-width="1"/></svg>
<div class="t" style="left:22.0px;top:778.5px;font-size:16px;color:#444">7</div>
<svg class="a" style="left:19px;top:795px;" width="14" height="12" viewBox="0 0 14 12"><path d="M8.5 0.5 L10 4.3 L13.8 4.5 L10.8 7 L11.8 11 L8.5 8.8 L5.2 11 L6.2 7 L3.2 4.5 L7 4.3Z" fill="#555"/><path d="M0.5 2.5 H3.5 M0.5 5.5 H3 M0.5 8.5 H3.5" stroke="#666" stroke-width="1"/></svg>
<div class="t" style="left:22.0px;top:853.0px;font-size:16px;color:#444">8</div>
<svg class="a" style="left:19px;top:869px;" width="14" height="12" viewBox="0 0 14 12"><path d="M8.5 0.5 L10 4.3 L13.8 4.5 L10.8 7 L11.8 11 L8.5 8.8 L5.2 11 L6.2 7 L3.2 4.5 L7 4.3Z" fill="#555"/><path d="M0.5 2.5 H3.5 M0.5 5.5 H3 M0.5 8.5 H3.5" stroke="#666" stroke-width="1"/></svg>
<div class="a" style="left:50px;top:330px;width:87px;height:49px;overflow:hidden;box-shadow:0 0 0 1px #d4d4d4"><svg width="87" height="49" viewBox="0 0 87 49" preserveAspectRatio="none"><rect width="87" height="49" fill="#fff"/><path d="M4 8 L7 5 L10 8 V10 H4Z" fill="#6b7a4a"/><path d="M12 3 V10" stroke="#555" stroke-width=".6"/><text x="14" y="9" font-size="5" font-family="Liberation Sans" fill="#445">djp</text><rect x="0" y="21" width="44" height="5" fill="#fec000"/><path d="M1 22.7 H40 M1 24.5 H30" stroke="#8a6a10" stroke-width=".6"/><path d="M1.5 29 H58 M1.5 31.3 H58 M1.5 33.6 H58 M1.5 35.9 H50 M1.5 38 H40" stroke="#9a9a9a" stroke-width=".6"/><circle cx="68" cy="16" r="5" fill="#9aa0a8" opacity=".6"/><path d="M58 41 Q58 25 68 24 Q78 25 78 41Z" fill="#f3b0a8" opacity=".6"/><circle cx="80" cy="13" r="2.5" fill="#e66" opacity=".6"/><circle cx="79" cy="21" r="3" fill="#e66" opacity=".6"/><rect x="40" y="33" width="17" height="8" fill="#bbb" opacity=".45"/><path d="M49 48 H58.5" stroke="#0b2262" stroke-width="1"/><path d="M58.5 48 H76" stroke="#fec000" stroke-width="1"/></svg></div>
<div class="a" style="left:50px;top:406px;width:87px;height:49px;overflow:hidden;box-shadow:0 0 0 1px #d4d4d4"><svg width="87" height="49" viewBox="0 0 87 49" preserveAspectRatio="none"><rect width="87" height="49" fill="#1c2b5a"/><rect x="3" y="3.2" width="24.4" height="4" fill="#f4f4f4"/><path d="M5 5.2 H25" stroke="#445" stroke-width=".8"/><rect x="83.5" y="3.2" width="3.5" height="4.3" fill="#fec000"/><circle cx="6.5" cy="12.3" r="2" fill="#e7b43a"/><path d="M10 11.100000000000001 H82 M10 13.5 H60" stroke="#c9cde0" stroke-width=".7" opacity=".8"/><circle cx="6.5" cy="20.1" r="2" fill="#e7b43a"/><path d="M10 18.900000000000002 H82 M10 21.3 H64" stroke="#c9cde0" stroke-width=".7" opacity=".8"/><circle cx="6.5" cy="25.9" r="2" fill="#e7b43a"/><path d="M10 24.7 H82 M10 27.099999999999998 H68" stroke="#c9cde0" stroke-width=".7" opacity=".8"/><circle cx="6.5" cy="33.4" r="2" fill="#e7b43a"/><path d="M10 32.199999999999996 H82 M10 34.6 H72" stroke="#c9cde0" stroke-width=".7" opacity=".8"/><circle cx="6.5" cy="41.6" r="2" fill="#e7b43a"/><path d="M10 40.4 H82 M10 42.800000000000004 H76" stroke="#c9cde0" stroke-width=".7" opacity=".8"/><path d="M49 47.5 H76" stroke="#8a8f50" stroke-width=".8"/></svg></div>
<div class="a" style="left:50px;top:480px;width:87px;height:49px;overflow:hidden;box-shadow:0 0 0 1px #d4d4d4"><svg width="87" height="49" viewBox="0 0 87 49" preserveAspectRatio="none"><rect width="87" height="49" fill="#fff"/><rect x="0" y="3" width="3" height="4" fill="#fec000"/><rect x="3.7" y="3.2" width="27" height="3.7" rx="1" fill="#1f2d66"/><path d="M5.2 5.1 H28.7" stroke="#d8dcea" stroke-width="1.33" opacity=".75"/><rect x="83.5" y="3" width="3.5" height="4" fill="#fec000"/><rect x="3.7" y="14" width="43" height="6.5" rx="1" fill="#1f2d66"/><path d="M5.2 16.1 H44.7 M5.2 18.6 H33.8" stroke="#d8dcea" stroke-width="1.30" opacity=".75"/><rect x="3.7" y="23.3" width="43" height="6.9" rx="1" fill="#1f2d66"/><path d="M5.2 25.6 H44.7 M5.2 28.1 H33.8" stroke="#d8dcea" stroke-width="1.38" opacity=".75"/><rect x="3.7" y="33.4" width="43" height="6.5" rx="1" fill="#1f2d66"/><path d="M5.2 35.5 H44.7 M5.2 37.9 H33.8" stroke="#d8dcea" stroke-width="1.30" opacity=".75"/><rect x="49" y="13" width="35.5" height="26" fill="#f37a6a" opacity=".85"/><rect x="54.4" y="7.5" width="23.6" height="12" rx="1" fill="#8e98e6" opacity=".75"/><circle cx="70" cy="12" r="3" fill="#5a66d0" opacity=".8"/><path d="M62 30 Q68 34 76 30" stroke="#fff" stroke-width="1.4" fill="none"/><path d="M53 26 L56 24 L58 42 L55 42Z" fill="#4a4fc0"/><circle cx="55" cy="22" r="2" fill="#2a2a60"/><path d="M78 26 L81 24 L83 42 L80 42Z" fill="#0b2262"/><circle cx="80" cy="22" r="2" fill="#2a2a60"/><path d="M49 48 H58" stroke="#777" stroke-width=".8"/></svg></div>
<div class="a" style="left:50px;top:555px;width:87px;height:49px;overflow:hidden;box-shadow:0 0 0 1px #d4d4d4"><svg width="87" height="49" viewBox="0 0 87 49" preserveAspectRatio="none"><rect width="87" height="49" fill="#fff"/><rect x="0" y="3.4" width="3.3" height="3.7" fill="#fec000"/><rect x="3.3" y="3.4" width="34.2" height="3.7" rx="1" fill="#1f2d66"/><path d="M4.8 5.2 H35.5" stroke="#d8dcea" stroke-width="1.33" opacity=".75"/><rect x="83.6" y="4" width="3.4" height="4" fill="#fec000"/><rect x="67.7" y="8.1" width="16" height="2.9" rx="1" fill="#fff" stroke="#888" stroke-width=".5"/><rect x="2.9" y="10.2" width="28.4" height="3.6" rx="1" fill="#1f2d66"/><path d="M4.4 12.0 H29.299999999999997" stroke="#d8dcea" stroke-width="1.30" opacity=".75"/><rect x="16.8" y="15.9" width="68.1" height="4.3" rx="1" fill="#1f2d66"/><path d="M18.3 18.1 H82.89999999999999" stroke="#d8dcea" stroke-width="1.55" opacity=".75"/><rect x="2.9" y="21.6" width="55.9" height="3.6" rx="1" fill="#1f2d66"/><path d="M4.4 23.4 H56.8" stroke="#d8dcea" stroke-width="1.30" opacity=".75"/><rect x="19" y="27" width="65.9" height="6" rx="1" fill="#1f2d66"/><path d="M20.5 29.0 H82.9 M20.5 31.2 H65.1" stroke="#d8dcea" stroke-width="1.20" opacity=".75"/><rect x="2.9" y="35.6" width="37.8" height="3.4" rx="1" fill="#1f2d66"/><path d="M4.4 37.3 H38.699999999999996" stroke="#d8dcea" stroke-width="1.22" opacity=".75"/><rect x="22.2" y="41.3" width="62.7" height="5.2" rx="1" fill="#1f2d66"/><path d="M23.7 43.0 H82.9 M23.7 44.9 H66.1" stroke="#d8dcea" stroke-width="1.04" opacity=".75"/><path d="M1 14.7 H40 M1 26.2 H60 M1 34.3 H84 M1 40.2 H84" stroke="#f0d890" stroke-width=".4"/><path d="M49 48 H59" stroke="#0b2262" stroke-width=".8"/></svg></div>
<div class="a" style="left:50px;top:630px;width:87px;height:49px;overflow:hidden;box-shadow:0 0 0 1px #d4d4d4"><svg width="87" height="49" viewBox="0 0 87 49" preserveAspectRatio="none"><rect width="87" height="49" fill="#fff"/><rect x="0" y="3.4" width="3.3" height="3.7" fill="#fec000"/><rect x="3.3" y="3.4" width="34.2" height="3.7" rx="1" fill="#1f2d66"/><path d="M4.8 5.2 H35.5" stroke="#d8dcea" stroke-width="1.33" opacity=".75"/><rect x="83.6" y="4" width="3.4" height="4" fill="#fec000"/><rect x="50.7" y="9.2" width="34.7" height="4.3" rx="1" fill="#1f2d66"/><path d="M52.2 11.3 H83.4" stroke="#d8dcea" stroke-width="1.55" opacity=".75"/><rect x="2.9" y="15.6" width="76.8" height="3.6" rx="1" fill="#1f2d66"/><path d="M4.4 17.4 H77.7" stroke="#d8dcea" stroke-width="1.30" opacity=".75"/><rect x="26.1" y="21.3" width="59.3" height="5.7" rx="1" fill="#1f2d66"/><path d="M27.6 23.2 H83.4 M27.6 25.3 H67.6" stroke="#d8dcea" stroke-width="1.14" opacity=".75"/><rect x="2.9" y="28.5" width="54.5" height="5.7" rx="1" fill="#1f2d66"/><path d="M4.4 30.4 H55.4 M4.4 32.5 H41.0" stroke="#d8dcea" stroke-width="1.14" opacity=".75"/><rect x="46.4" y="36.3" width="39" height="2.8" rx="1" fill="#1f2d66"/><path d="M47.9 37.7 H83.4" stroke="#d8dcea" stroke-width="1.01" opacity=".75"/><rect x="2.9" y="41.3" width="63.7" height="4.2" rx="1" fill="#1f2d66"/><path d="M4.4 43.4 H64.60000000000001" stroke="#d8dcea" stroke-width="1.51" opacity=".75"/><path d="M49 48.5 H59" stroke="#0b2262" stroke-width=".8"/></svg></div>
<div class="a" style="left:50px;top:704px;width:87px;height:49px;overflow:hidden;box-shadow:0 0 0 1px #d4d4d4"><svg width="87" height="49" viewBox="0 0 87 49" preserveAspectRatio="none"></svg></div>
<div class="a" style="left:50px;top:704px;width:87px;height:49px;overflow:hidden;background:#fff;box-shadow:0 0 0 1px #d4d4d4"><div class="a" style="left:0;top:0;width:1920px;height:1019px;transform-origin:0 0;transform:translate(-34.949px,-31.138px) scale(0.09295)"><div class="a" style="left:376px;top:335px;width:936px;height:516px;background:#fff"></div>
<svg class="a" style="left:0;top:0" width="1920" height="1019" viewBox="0 0 1920 1019"><defs><clipPath id="sc6"><rect x="376" y="335" width="936" height="516"/></clipPath></defs><g clip-path="url(#sc6)"><g fill="#f8f8fa"><rect x="1048" y="412" width="206" height="30"/><rect x="1067" y="384" width="60" height="28"/><rect x="1175" y="384" width="67" height="58"/><rect x="1187" y="365" width="13" height="19"/><rect x="1199" y="443" width="11" height="24"/><rect x="470" y="365" width="137" height="150" fill="#fbfbfc"/></g><path d="M1048 439 H1254" stroke="#f3f3f5" stroke-width="5"/><polygon points="550.0,612.0 549.4,619.8 539.9,625.0 537.4,631.1 540.5,641.4 535.4,647.4 524.7,646.0 519.1,649.4 515.5,659.6 507.8,661.4 500.0,654.0 493.4,653.5 484.5,659.6 477.3,656.6 475.3,646.0 470.3,641.7 459.5,641.4 455.4,634.7 460.1,625.0 458.5,618.6 450.0,612.0 450.6,604.2 460.1,599.0 462.6,592.9 459.5,582.6 464.6,576.6 475.3,578.0 480.9,574.6 484.5,564.4 492.2,562.6 500.0,570.0 506.6,570.5 515.5,564.4 522.7,567.4 524.7,578.0 529.7,582.3 540.5,582.6 544.6,589.3 539.9,599.0 541.5,605.4" fill="#fafafb" opacity="1"/><circle cx="500" cy="612" r="22" fill="#fff"/><polygon points="832.0,662.0 831.4,669.3 822.9,674.0 820.3,679.5 822.2,689.0 817.0,694.2 807.5,692.3 802.0,694.9 797.3,703.4 790.0,704.0 783.9,696.5 778.0,694.9 769.0,698.4 763.0,694.2 763.2,684.5 759.7,679.5 750.5,676.4 748.6,669.3 755.0,662.0 755.5,655.9 750.5,647.6 753.6,641.0 763.2,639.5 767.5,635.2 769.0,625.6 775.6,622.5 783.9,627.5 790.0,627.0 797.3,620.6 804.4,622.5 807.5,631.7 812.5,635.2 822.2,635.0 826.4,641.0 822.9,650.0 824.5,655.9" fill="#f9f9fa" opacity="1"/><circle cx="790" cy="662" r="18" fill="#fff"/><polygon points="906.0,606.0 905.3,614.0 895.7,619.0 892.9,625.0 895.2,635.6 889.6,641.2 879.0,638.9 873.0,641.7 868.0,651.3 860.0,652.0 853.4,643.4 847.0,641.7 837.0,645.8 830.4,641.2 830.9,630.4 827.1,625.0 816.8,621.7 814.7,614.0 822.0,606.0 822.6,599.4 816.8,590.3 820.2,583.0 830.9,581.6 835.6,576.9 837.0,566.2 844.3,562.8 853.4,568.6 860.0,568.0 868.0,560.7 875.7,562.8 879.0,573.1 884.4,576.9 895.2,576.4 899.8,583.0 895.7,593.0 897.4,599.4" fill="#f6caca" opacity="1"/><g fill="none" stroke="#c9c9cc" stroke-width="1"><path d="M652 675 Q720 700 768 640"/><path d="M668 690 Q745 705 790 655"/></g><path d="M566 578 L675 628 L692 705 L672 792 L600 794 L618 712 L605 640 L560 705 L518 792 L468 790 L528 702 Z" fill="#adb1b6"/><path d="M572 585 Q580 560 600 540 L631 511 L727 511 L748 590 L690 612 L672 632 Z" fill="#c0c4c8"/><polygon points="764.0,608.0 763.3,616.9 751.7,622.5 748.9,629.3 753.1,641.5 747.3,648.3 734.6,646.0 728.3,649.9 724.6,662.2 715.9,664.3 707.0,655.0 699.6,654.4 689.4,662.2 681.1,658.8 679.4,646.0 673.8,641.2 660.9,641.5 656.2,633.9 662.3,622.5 660.6,615.4 650.0,608.0 650.7,599.1 662.3,593.5 665.1,586.7 660.9,574.5 666.7,567.7 679.4,570.0 685.7,566.1 689.4,553.8 698.1,551.7 707.0,561.0 714.4,561.6 724.6,553.8 732.9,557.2 734.6,570.0 740.2,574.8 753.1,574.5 757.8,582.1 751.7,593.5 753.4,600.6" fill="#f6c6c6" opacity="1"/><g fill="none" stroke="#fff" stroke-width="1.2" opacity=".95"><circle cx="704" cy="605" r="7"/><circle cx="704" cy="605" r="15"/><circle cx="704" cy="605" r="24"/><circle cx="704" cy="605" r="33"/></g><path d="M660 606 H700" stroke="#fff" stroke-width="2.2"/><path d="M693 600 L703 605 L693 611Z" fill="#fff"/><path d="M700 511 L727 511 L812 547 L815 581 L752 591 L722 586 Z" fill="#c0c4c8"/><path d="M811 546 Q836 540 842 556 Q846 576 826 584 L812 582 Z" fill="#f9e6e2"/><path d="M738 444 Q758 436 778 446 Q782 466 772 474 Q750 478 740 466 Z" fill="#f9efec"/><path d="M720 442 Q712 428 726 420 Q732 410 748 414 Q760 406 772 414 Q788 410 792 424 Q802 432 794 444 Q798 456 786 458 Q780 448 766 446 Q750 442 740 446 Q736 462 726 456 Q714 452 720 442Z" fill="#b3b7bc"/><path d="M748 452 Q754 449 760 452" stroke="#777" stroke-width="1" fill="none"/><circle cx="765" cy="461" r="1.8" fill="#666"/><path d="M744 470 Q750 474 756 471" stroke="#999" stroke-width="1" fill="none"/><path d="M462 800 L518 790 L520 812 L510 836 Z" fill="#f4bdb9"/><path d="M462 800 L510 836 L506 838 L458 806Z" fill="#c8aaa8"/><path d="M598 794 L648 796 L662 818 L598 818 Z" fill="#f4bdb9"/><path d="M598 816 H662 V821 H598Z" fill="#b9abab"/><rect x="811" y="477" width="32" height="34" fill="#f8d6d6"/><path d="M815 508 L840 482" stroke="#fff" stroke-width="3"/><rect x="961" y="808" width="56" height="13" fill="#f6cccc"/><path d="M947 692 L955 705 M1030 692 L1026 705" stroke="#c4c4c6" stroke-width="6"/><path d="M458 821 H1230" stroke="#e6e6e8" stroke-width="1.2"/></g></svg>
<div class="a" style="left:403px;top:377px;width:35px;height:40px;background:#fec000"></div>
<div class="a" style="left:438px;top:377px;width:461px;height:40px;background:#0b2262"></div>
<div class="t" style="left:448.0px;top:384.6px;font-size:25.1px;color:#fff;font-weight:bold">DETAIL PERUBAHAN PENGATURAN</div>
<div class="a" style="left:1270px;top:381px;width:70px;height:38px;background:#fec000;border-radius:7px"></div>
<div class="t" style="left:1284.0px;top:392.5px;font-size:16px;color:#111;font-weight:bold">6</div>
<div class="a" style="left:469px;top:436px;width:270px;height:75px;background:#0b2262;border-radius:6px 6px 0 7px"></div>
<div class="t" style="left:498.0px;top:447.6px;font-size:17.8px;color:#fff;font-weight:bold">PERUBAHAN</div>
<div class="a" style="left:485px;top:471px;width:326px;height:40px;background:#fff;box-shadow:2px 3px 3px rgba(0,0,0,.28)"></div>
<div class="t" style="left:491.7px;top:482.8px;font-size:12.85px;color:#111;font-weight:bold">Sarana <span style="">Penyampaian</span> SPT <span style="">PPh</span> 21/26</div>
<div class="a" style="left:469px;top:706px;width:270px;height:74px;background:#0b2262;border-radius:6px 6px 0 7px"></div>
<div class="t" style="left:498.0px;top:717.2px;font-size:17.8px;color:#fff;font-weight:bold">PERUBAHAN</div>
<div class="a" style="left:485px;top:740px;width:327px;height:39px;background:#fff;box-shadow:2px 3px 3px rgba(0,0,0,.28)"></div>
<div class="t" style="left:492.2px;top:753.0px;font-size:12.8px;color:#111;font-weight:bold"><span style="">Penambahan</span> <span style="">Jenis</span> Bukti <span style="">Potong</span></div>
<div class="a" style="left:842px;top:436px;width:270px;height:60px;background:#fec000;border-radius:7px 7px 0 0"></div>
<div class="a" style="left:842px;top:460px;width:40px;height:230px;background:#fec000;border-radius:0 0 0 8px"></div>
<div class="t" style="left:865.2px;top:445.0px;font-size:17.7px;color:#0d1f4f;font-weight:bold">DETAIL PERUBAHAN</div>
<div class="a" style="left:863px;top:468px;width:356px;height:224px;background:#fff;box-shadow:2px 3px 3px rgba(0,0,0,.28)"></div>
<div class="t" style="left:891.3px;top:479.1px;width:321px;font-size:13.1px;color:#111;word-spacing:-1.6px;text-align:justify;text-align-last:justify"><span style="">Aplikasi</span> <i>e-SPT Desktop</i> <span style="">menjadi</span> <i>e-SPT Web</i> pada <span style="">laman</span></div>
<div class="t" style="left:891.3px;top:494.9px;width:321px;font-size:13.1px;color:#111">DJP Online</div>
<div class="t" style="left:891.3px;top:510.7px;width:321px;font-size:13.1px;color:#111;text-align:justify;text-align-last:justify"><span style="">Penyampaian</span> SPT <span style="">dalam</span> <span style="">bentuk</span> <span style="">kertas</span> <span style="">masih</span> <span style="">tetap</span></div>
<div class="t" style="left:891.3px;top:526.5px;width:321px;font-size:13.1px;color:#111"><span style="">disediakan</span> <span style="">untuk</span> <span style="">kondisi</span> <span style="">tertentu</span></div>
<div class="t" style="left:891.3px;top:542.3px;width:321px;font-size:13.1px;color:#111;text-align:justify;text-align-last:justify"><span style="">Penyampaian</span> <i>e-SPT</i> <span style="">melalui</span> media <span style="">elektronik</span> <span style="">tidak</span></div>
<div class="t" style="left:891.3px;top:558.1px;width:321px;font-size:13.1px;color:#111;word-spacing:-1.0px;text-align:justify;text-align-last:justify"><span style="">disediakan</span> <span style="">karena</span> <span style="">tidak</span> <span style="">relevan</span> <span style="">dengan</span> <i>e-SPT</i> <span style="">berbasis</span></div>
<div class="t" style="left:891.3px;top:573.9px;width:321px;font-size:13.1px;color:#111">web</div>
<div class="t" style="left:891.3px;top:590.1px;width:321px;font-size:13.1px;color:#111;text-align:justify;text-align-last:justify"><span style="">Terdapat</span> <span style="">fitur</span> import &nbsp;<span style="">dalam</span> format excel <span style="">untuk</span></div>
<div class="t" style="left:891.3px;top:605.4px;width:321px;font-size:13.1px;color:#111"><span style="">membantu</span> <span style="">Wajib</span> <span style="">Pajak</span>:</div>
<div class="t" style="left:903.5px;top:620.9px;width:30px;font-size:13.1px;color:#111">1.</div>
<div class="t" style="left:929.5px;top:620.9px;width:283px;font-size:13.1px;color:#111"><span style="">mengisi</span> SPT <span style="">secara</span> offline;</div>
<div class="t" style="left:903.5px;top:636.6px;width:30px;font-size:13.1px;color:#111">2.</div>
<div class="t" style="left:929.5px;top:636.6px;width:283px;font-size:13.1px;color:#111"><span style="">menginput</span> <span style="">bukti</span> <span style="">potong</span> <span style="">dalam</span> <span style="">jumlah</span> <span style="">banyak</span>;</div>
<div class="t" style="left:903.5px;top:652.5px;width:30px;font-size:13.1px;color:#111">3.</div>
<div class="t" style="left:929.5px;top:652.5px;width:283px;font-size:13.1px;color:#111;text-align:justify;text-align-last:justify"><span style="">mencetak</span> <span style="">bukti</span> <span style="">potong</span> <span style="">bagi</span> WP yang <span style="">masih</span></div>
<div class="t" style="left:929.5px;top:668.2px;width:283px;font-size:13.1px;color:#111"><span style="">menggunakan</span> <span style="">formulir</span> <span style="">kertas</span>.</div>
<div class="a" style="left:871px;top:483px;width:4px;height:4px;background:#111"></div>
<div class="a" style="left:871px;top:515px;width:4px;height:4px;background:#111"></div>
<div class="a" style="left:871px;top:546px;width:4px;height:4px;background:#111"></div>
<div class="a" style="left:871px;top:594px;width:4px;height:4px;background:#111"></div>
<div class="a" style="left:842px;top:705px;width:270px;height:50px;background:#fec000;border-radius:7px 7px 0 0"></div>
<div class="a" style="left:842px;top:730px;width:40px;height:76px;background:#fec000;border-radius:0 0 0 8px"></div>
<div class="t" style="left:865.3px;top:715.2px;font-size:17.7px;color:#0d1f4f;font-weight:bold">DETAIL PERUBAHAN</div>
<div class="a" style="left:863px;top:738px;width:356px;height:72px;background:#fff;box-shadow:2px 3px 3px rgba(0,0,0,.28)"></div>
<div class="t" style="left:870.3px;top:752.1px;width:342px;font-size:13.1px;color:#111;text-align:justify;text-align-last:justify"><span style="">Penambahan</span> Bukti <span style="">Pemotongan</span> PPh <span style="">Pasal</span> 21 <span style="">Bulanan</span></div>
<div class="t" style="left:870.3px;top:768.3px;width:342px;font-size:13.1px;color:#111;text-align:justify;text-align-last:justify">(<span style="">Formulir</span> 1721-VIII) <span style="">bagi</span> <span style="">Pegawai</span> <span style="">Tetap</span> <span style="">atau</span> <span style="">Pensiunan</span></div>
<div class="t" style="left:870.3px;top:784.5px;width:342px;font-size:13.1px;color:#111">yang <span style="">menerima</span> uang <span style="">terkait</span> <span style="">pensiun</span> <span style="">secara</span> <span style="">berkala</span>.</div>
<div class="a" style="left:910px;top:833px;width:98px;height:4px;background:#0b2262"></div>
<div class="a" style="left:1008px;top:833px;width:196px;height:4px;background:linear-gradient(90deg,#f5bf10,#f3e040)"></div>
<div class="t" style="left:1212.8px;top:830.2px;font-size:10.4px;color:#333">www.pajak.go.id</div></div></div>
<div class="a" style="left:50px;top:779px;width:87px;height:49px;overflow:hidden;box-shadow:0 0 0 1px #d4d4d4"><svg width="87" height="49" viewBox="0 0 87 49" preserveAspectRatio="none"><rect width="87" height="49" fill="#fff"/><rect x="0.5" y="3" width="3" height="4" fill="#fec000"/><rect x="3.7" y="3" width="43.5" height="3.2" fill="#0b2262"/><path d="M6 4.6 H44" stroke="#c8cce0" stroke-width="1"/><rect x="83.4" y="3" width="3.2" height="4.4" fill="#fec000"/><path d="M14 27 L22 20.5 L38 21.5 L37 25 L26 26 L22 31Z" fill="#bcc0c5" opacity=".8"/><path d="M7 44 L13 33 L19 33 L13 45Z M18 44 L24 33 L29 33 L22 45Z" fill="#b3b7bb" opacity=".85"/><rect x="6.7" y="10" width="25.2" height="9.6" rx=".8" fill="#0b2262"/><rect x="8" y="12.9" width="30.6" height="6.7" fill="#fff" stroke="#d0d0d0" stroke-width=".4"/><path d="M9 14.7 H37 M9 16.6 H37 M9 18.3 H24" stroke="#5a5a5a" stroke-width=".7"/><rect x="6.7" y="27.2" width="25.2" height="6.5" rx=".8" fill="#0b2262"/><rect x="8" y="30" width="30.6" height="3.7" fill="#fff" stroke="#d0d0d0" stroke-width=".4"/><path d="M9 31.8 H37" stroke="#5a5a5a" stroke-width=".7"/><rect x="41.7" y="10" width="25.8" height="3" fill="#fec000"/><rect x="41.7" y="10" width="3" height="14.5" fill="#fec000"/><path d="M46 13.8 H77 M46 15.9 H77 M46 18 H77 M46 20.1 H72 M46 22.2 H64" stroke="#5a5a5a" stroke-width=".7"/><rect x="41.7" y="26.4" width="25.8" height="3.6" fill="#fec000"/><rect x="41.7" y="26.4" width="3" height="17.8" fill="#fec000"/><path d="M46 31.6 H77 M46 33.7 H70 M46 36 H77 M46 38 H77 M46 40.2 H74 M46 42.2 H60" stroke="#5a5a5a" stroke-width=".7"/><path d="M49 47.2 H58.3" stroke="#0b2262" stroke-width=".8"/></svg></div>
<div class="a" style="left:50px;top:854px;width:87px;height:44px;overflow:hidden;box-shadow:0 0 0 1px #d4d4d4"><svg width="87" height="49" viewBox="0 0 87 49" preserveAspectRatio="none"><rect width="87" height="49" fill="#fff"/><rect x="0.5" y="3" width="3" height="4" fill="#fec000"/><rect x="3.7" y="3" width="43.5" height="3.2" fill="#0b2262"/><path d="M6 4.6 H44" stroke="#c8cce0" stroke-width="1"/><rect x="83.4" y="3" width="3.2" height="4.4" fill="#fec000"/><path d="M7 45 L11 38.5 L16 38.5 L12 46Z M18 45 L21 38.5 L25 38.5 L21 46Z" fill="#b3b7bb" opacity=".85"/><rect x="6.7" y="9.0" width="25.2" height="9.5" rx=".8" fill="#0b2262"/><rect x="8" y="12.2" width="30.6" height="6.3" fill="#fff" stroke="#d0d0d0" stroke-width=".4"/><path d="M9 14.0 H37 M9 16.0 H30" stroke="#5a5a5a" stroke-width=".7"/><rect x="6.7" y="21.4" width="25.2" height="9.5" rx=".8" fill="#0b2262"/><rect x="8" y="24.6" width="30.6" height="6.3" fill="#fff" stroke="#d0d0d0" stroke-width=".4"/><path d="M9 26.4 H37 M9 28.4 H30" stroke="#5a5a5a" stroke-width=".7"/><rect x="6.7" y="32.2" width="25.2" height="6.5" rx=".8" fill="#0b2262"/><rect x="8" y="35.4" width="30.6" height="3.3" fill="#fff" stroke="#d0d0d0" stroke-width=".4"/><path d="M9 37.2 H37 M9 39.2 H30" stroke="#5a5a5a" stroke-width=".7"/><rect x="41.7" y="8.7" width="25.8" height="2.9" fill="#fec000"/><rect x="41.7" y="8.7" width="3" height="10" fill="#fec000"/><path d="M46 13.7 H77 M46 15.7 H74" stroke="#5a5a5a" stroke-width=".7"/><rect x="41.7" y="21.2" width="25.8" height="2.9" fill="#fec000"/><rect x="41.7" y="21.2" width="3" height="10" fill="#fec000"/><path d="M46 26.2 H77 M46 28.2 H74" stroke="#5a5a5a" stroke-width=".7"/><rect x="41.7" y="32.0" width="25.8" height="2.9" fill="#fec000"/><rect x="41.7" y="32.0" width="3" height="17" fill="#fec000"/><path d="M46 37.0 H77 M46 39.0 H74" stroke="#5a5a5a" stroke-width=".7"/></svg></div>
<svg class="a" style="left:108px;top:488px;" width="20" height="24" viewBox="0 0 20 24"><path d="M2 1.5 V19 L6.5 15 L10 22 L13 20.5 L9.5 13.8 H15.5Z" fill="#fff" stroke="#222" stroke-width="1.3" stroke-linejoin="round"/></svg>
<div class="a" style="left:46px;top:701px;width:95px;height:57px;border:3.5px solid #701515"></div>
<div class="a" style="left:406px;top:311px;width:901px;height:17px;background:#fff"></div>
<svg class="a" style="left:406px;top:311px;" width="901" height="17" viewBox="0 0 901 17"><text x="22.9" y="13" font-size="12.5" text-anchor="middle" font-family="Liberation Sans" fill="#555">16</text><path d="M29.6 8 V10" stroke="#888" stroke-width="1"/><path d="M36.3 5 V12" stroke="#666" stroke-width="1"/><path d="M42.9 8 V10" stroke="#888" stroke-width="1"/><path d="M2.9 8 V10" stroke="#888" stroke-width="1"/><path d="M9.6 5 V12" stroke="#666" stroke-width="1"/><path d="M16.3 8 V10" stroke="#888" stroke-width="1"/><text x="49.6" y="13" font-size="12.5" text-anchor="middle" font-family="Liberation Sans" fill="#555">15</text><path d="M56.3 8 V10" stroke="#888" stroke-width="1"/><path d="M62.9 5 V12" stroke="#666" stroke-width="1"/><path d="M69.6 8 V10" stroke="#888" stroke-width="1"/><text x="76.3" y="13" font-size="12.5" text-anchor="middle" font-family="Liberation Sans" fill="#555">14</text><path d="M82.9 8 V10" stroke="#888" stroke-width="1"/><path d="M89.6 5 V12" stroke="#666" stroke-width="1"/><path d="M96.3 8 V10" stroke="#888" stroke-width="1"/><text x="102.9" y="13" font-size="12.5" text-anchor="middle" font-family="Liberation Sans" fill="#555">13</text><path d="M109.6 8 V10" stroke="#888" stroke-width="1"/><path d="M116.3 5 V12" stroke="#666" stroke-width="1"/><path d="M122.9 8 V10" stroke="#888" stroke-width="1"/><text x="129.6" y="13" font-size="12.5" text-anchor="middle" font-family="Liberation Sans" fill="#555">12</text><path d="M136.2 8 V10" stroke="#888" stroke-width="1"/><path d="M142.9 5 V12" stroke="#666" stroke-width="1"/><path d="M149.6 8 V10" stroke="#888" stroke-width="1"/><text x="156.2" y="13" font-size="12.5" text-anchor="middle" font-family="Liberation Sans" fill="#555">11</text><path d="M162.9 8 V10" stroke="#888" stroke-width="1"/><path d="M169.6 5 V12" stroke="#666" stroke-width="1"/><path d="M176.2 8 V10" stroke="#888" stroke-width="1"/><text x="182.9" y="13" font-size="12.5" text-anchor="middle" font-family="Liberation Sans" fill="#555">10</text><path d="M189.6 8 V10" stroke="#888" stroke-width="1"/><path d="M196.2 5 V12" stroke="#666" stroke-width="1"/><path d="M202.9 8 V10" stroke="#888" stroke-width="1"/><text x="209.6" y="13" font-size="12.5" text-anchor="middle" font-family="Liberation Sans" fill="#555">9</text><path d="M216.2 8 V10" stroke="#888" stroke-width="1"/><path d="M222.9 5 V12" stroke="#666" stroke-width="1"/><path d="M229.6 8 V10" stroke="#888" stroke-width="1"/><text x="236.2" y="13" font-size="12.5" text-anchor="middle" font-family="Liberation Sans" fill="#555">8</text><path d="M242.9 8 V10" stroke="#888" stroke-width="1"/><path d="M249.6 5 V12" stroke="#666" stroke-width="1"/><path d="M256.2 8 V10" stroke="#888" stroke-width="1"/><text x="262.9" y="13" font-size="12.5" text-anchor="middle" font-family="Liberation Sans" fill="#555">7</text><path d="M269.5 8 V10" stroke="#888" stroke-width="1"/><path d="M276.2 5 V12" stroke="#666" stroke-width="1"/><path d="M282.9 8 V10" stroke="#888" stroke-width="1"/><text x="289.5" y="13" font-size="12.5" text-anchor="middle" font-family="Liberation Sans" fill="#555">6</text><path d="M296.2 8 V10" stroke="#888" stroke-width="1"/><path d="M302.9 5 V12" stroke="#666" stroke-width="1"/><path d="M309.5 8 V10" stroke="#888" stroke-width="1"/><text x="316.2" y="13" font-size="12.5" text-anchor="middle" font-family="Liberation Sans" fill="#555">5</text><path d="M322.9 8 V10" stroke="#888" stroke-width="1"/><path d="M329.5 5 V12" stroke="#666" stroke-width="1"/><path d="M336.2 8 V10" stroke="#888" stroke-width="1"/><text x="342.9" y="13" font-size="12.5" text-anchor="middle" font-family="Liberation Sans" fill="#555">4</text><path d="M349.5 8 V10" stroke="#888" stroke-width="1"/><path d="M356.2 5 V12" stroke="#666" stroke-width="1"/><path d="M362.9 8 V10" stroke="#888" stroke-width="1"/><text x="369.5" y="13" font-size="12.5" text-anchor="middle" font-family="Liberation Sans" fill="#555">3</text><path d="M376.2 8 V10" stroke="#888" stroke-width="1"/><path d="M382.8 5 V12" stroke="#666" stroke-width="1"/><path d="M389.5 8 V10" stroke="#888" stroke-width="1"/><text x="396.2" y="13" font-size="12.5" text-anchor="middle" font-family="Liberation Sans" fill="#555">2</text><path d="M402.8 8 V10" stroke="#888" stroke-width="1"/><path d="M409.5 5 V12" stroke="#666" stroke-width="1"/><path d="M416.2 8 V10" stroke="#888" stroke-width="1"/><text x="422.8" y="13" font-size="12.5" text-anchor="middle" font-family="Liberation Sans" fill="#555">1</text><path d="M429.5 8 V10" stroke="#888" stroke-width="1"/><path d="M436.2 5 V12" stroke="#666" stroke-width="1"/><path d="M442.8 8 V10" stroke="#888" stroke-width="1"/><text x="449.5" y="13" font-size="12.5" text-anchor="middle" font-family="Liberation Sans" fill="#555">0</text><path d="M456.2 8 V10" stroke="#888" stroke-width="1"/><path d="M462.8 5 V12" stroke="#666" stroke-width="1"/><path d="M469.5 8 V10" stroke="#888" stroke-width="1"/><text x="476.2" y="13" font-size="12.5" text-anchor="middle" font-family="Liberation Sans" fill="#555">1</text><path d="M482.8 8 V10" stroke="#888" stroke-width="1"/><path d="M489.5 5 V12" stroke="#666" stroke-width="1"/><path d="M496.2 8 V10" stroke="#888" stroke-width="1"/><text x="502.8" y="13" font-size="12.5" text-anchor="middle" font-family="Liberation Sans" fill="#555">2</text><path d="M509.5 8 V10" stroke="#888" stroke-width="1"/><path d="M516.2 5 V12" stroke="#666" stroke-width="1"/><path d="M522.8 8 V10" stroke="#888" stroke-width="1"/><text x="529.5" y="13" font-size="12.5" text-anchor="middle" font-family="Liberation Sans" fill="#555">3</text><path d="M536.1 8 V10" stroke="#888" stroke-width="1"/><path d="M542.8 5 V12" stroke="#666" stroke-width="1"/><path d="M549.5 8 V10" stroke="#888" stroke-width="1"/><text x="556.1" y="13" font-size="12.5" text-anchor="middle" font-family="Liberation Sans" fill="#555">4</text><path d="M562.8 8 V10" stroke="#888" stroke-width="1"/><path d="M569.5 5 V12" stroke="#666" stroke-width="1"/><path d="M576.1 8 V10" stroke="#888" stroke-width="1"/><text x="582.8" y="13" font-size="12.5" text-anchor="middle" font-family="Liberation Sans" fill="#555">5</text><path d="M589.5 8 V10" stroke="#888" stroke-width="1"/><path d="M596.1 5 V12" stroke="#666" stroke-width="1"/><path d="M602.8 8 V10" stroke="#888" stroke-width="1"/><text x="609.5" y="13" font-size="12.5" text-anchor="middle" font-family="Liberation Sans" fill="#555">6</text><path d="M616.1 8 V10" stroke="#888" stroke-width="1"/><path d="M622.8 5 V12" stroke="#666" stroke-width="1"/><path d="M629.5 8 V10" stroke="#888" stroke-width="1"/><text x="636.1" y="13" font-size="12.5" text-anchor="middle" font-family="Liberation Sans" fill="#555">7</text><path d="M642.8 8 V10" stroke="#888" stroke-width="1"/><path d="M649.4 5 V12" stroke="#666" stroke-width="1"/><path d="M656.1 8 V10" stroke="#888" stroke-width="1"/><text x="662.8" y="13" font-size="12.5" text-anchor="middle" font-family="Liberation Sans" fill="#555">8</text><path d="M669.4 8 V10" stroke="#888" stroke-width="1"/><path d="M676.1 5 V12" stroke="#666" stroke-width="1"/><path d="M682.8 8 V10" stroke="#888" stroke-width="1"/><text x="689.4" y="13" font-size="12.5" text-anchor="middle" font-family="Liberation Sans" fill="#555">9</text><path d="M696.1 8 V10" stroke="#888" stroke-width="1"/><path d="M702.8 5 V12" stroke="#666" stroke-width="1"/><path d="M709.4 8 V10" stroke="#888" stroke-width="1"/><text x="716.1" y="13" font-size="12.5" text-anchor="middle" font-family="Liberation Sans" fill="#555">10</text><path d="M722.8 8 V10" stroke="#888" stroke-width="1"/><path d="M729.4 5 V12" stroke="#666" stroke-width="1"/><path d="M736.1 8 V10" stroke="#888" stroke-width="1"/><text x="742.8" y="13" font-size="12.5" text-anchor="middle" font-family="Liberation Sans" fill="#555">11</text><path d="M749.4 8 V10" stroke="#888" stroke-width="1"/><path d="M756.1 5 V12" stroke="#666" stroke-width="1"/><path d="M762.8 8 V10" stroke="#888" stroke-width="1"/><text x="769.4" y="13" font-size="12.5" text-anchor="middle" font-family="Liberation Sans" fill="#555">12</text><path d="M776.1 8 V10" stroke="#888" stroke-width="1"/><path d="M782.8 5 V12" stroke="#666" stroke-width="1"/><path d="M789.4 8 V10" stroke="#888" stroke-width="1"/><text x="796.1" y="13" font-size="12.5" text-anchor="middle" font-family="Liberation Sans" fill="#555">13</text><path d="M802.7 8 V10" stroke="#888" stroke-width="1"/><path d="M809.4 5 V12" stroke="#666" stroke-width="1"/><path d="M816.1 8 V10" stroke="#888" stroke-width="1"/><text x="822.7" y="13" font-size="12.5" text-anchor="middle" font-family="Liberation Sans" fill="#555">14</text><path d="M829.4 8 V10" stroke="#888" stroke-width="1"/><path d="M836.1 5 V12" stroke="#666" stroke-width="1"/><path d="M842.7 8 V10" stroke="#888" stroke-width="1"/><text x="849.4" y="13" font-size="12.5" text-anchor="middle" font-family="Liberation Sans" fill="#555">15</text><path d="M856.1 8 V10" stroke="#888" stroke-width="1"/><path d="M862.7 5 V12" stroke="#666" stroke-width="1"/><path d="M869.4 8 V10" stroke="#888" stroke-width="1"/><text x="876.1" y="13" font-size="12.5" text-anchor="middle" font-family="Liberation Sans" fill="#555">16</text><path d="M882.7 8 V10" stroke="#888" stroke-width="1"/><path d="M889.4 5 V12" stroke="#666" stroke-width="1"/></svg>
<div class="a" style="left:190px;top:344px;width:16px;height:505px;background:#fff"></div>
<svg class="a" style="left:190px;top:344px;" width="16" height="505" viewBox="0 0 16 505"><text x="0" y="0" font-size="12.5" text-anchor="middle" font-family="Liberation Sans" fill="#555" transform="translate(12.5 12.4) rotate(-90)">9</text><path d="M7 19.1 H9" stroke="#888" stroke-width="1"/><path d="M4 25.8 H11" stroke="#666" stroke-width="1"/><path d="M7 32.4 H9" stroke="#888" stroke-width="1"/><text x="0" y="0" font-size="12.5" text-anchor="middle" font-family="Liberation Sans" fill="#555" transform="translate(12.5 39.1) rotate(-90)">8</text><path d="M7 45.8 H9" stroke="#888" stroke-width="1"/><path d="M4 52.5 H11" stroke="#666" stroke-width="1"/><path d="M7 59.1 H9" stroke="#888" stroke-width="1"/><text x="0" y="0" font-size="12.5" text-anchor="middle" font-family="Liberation Sans" fill="#555" transform="translate(12.5 65.8) rotate(-90)">7</text><path d="M7 72.5 H9" stroke="#888" stroke-width="1"/><path d="M4 79.2 H11" stroke="#666" stroke-width="1"/><path d="M7 85.8 H9" stroke="#888" stroke-width="1"/><text x="0" y="0" font-size="12.5" text-anchor="middle" font-family="Liberation Sans" fill="#555" transform="translate(12.5 92.5) rotate(-90)">6</text><path d="M7 99.2 H9" stroke="#888" stroke-width="1"/><path d="M4 105.9 H11" stroke="#666" stroke-width="1"/><path d="M7 112.5 H9" stroke="#888" stroke-width="1"/><text x="0" y="0" font-size="12.5" text-anchor="middle" font-family="Liberation Sans" fill="#555" transform="translate(12.5 119.2) rotate(-90)">5</text><path d="M7 125.9 H9" stroke="#888" stroke-width="1"/><path d="M4 132.6 H11" stroke="#666" stroke-width="1"/><path d="M7 139.2 H9" stroke="#888" stroke-width="1"/><text x="0" y="0" font-size="12.5" text-anchor="middle" font-family="Liberation Sans" fill="#555" transform="translate(12.5 145.9) rotate(-90)">4</text><path d="M7 152.6 H9" stroke="#888" stroke-width="1"/><path d="M4 159.3 H11" stroke="#666" stroke-width="1"/><path d="M7 165.9 H9" stroke="#888" stroke-width="1"/><text x="0" y="0" font-size="12.5" text-anchor="middle" font-family="Liberation Sans" fill="#555" transform="translate(12.5 172.6) rotate(-90)">3</text><path d="M7 179.3 H9" stroke="#888" stroke-width="1"/><path d="M4 186.0 H11" stroke="#666" stroke-width="1"/><path d="M7 192.6 H9" stroke="#888" stroke-width="1"/><text x="0" y="0" font-size="12.5" text-anchor="middle" font-family="Liberation Sans" fill="#555" transform="translate(12.5 199.3) rotate(-90)">2</text><path d="M7 206.0 H9" stroke="#888" stroke-width="1"/><path d="M4 212.7 H11" stroke="#666" stroke-width="1"/><path d="M7 219.3 H9" stroke="#888" stroke-width="1"/><text x="0" y="0" font-size="12.5" text-anchor="middle" font-family="Liberation Sans" fill="#555" transform="translate(12.5 226.0) rotate(-90)">1</text><path d="M7 232.7 H9" stroke="#888" stroke-width="1"/><path d="M4 239.3 H11" stroke="#666" stroke-width="1"/><path d="M7 246.0 H9" stroke="#888" stroke-width="1"/><text x="0" y="0" font-size="12.5" text-anchor="middle" font-family="Liberation Sans" fill="#555" transform="translate(12.5 252.7) rotate(-90)">0</text><path d="M7 259.4 H9" stroke="#888" stroke-width="1"/><path d="M4 266.1 H11" stroke="#666" stroke-width="1"/><path d="M7 272.7 H9" stroke="#888" stroke-width="1"/><text x="0" y="0" font-size="12.5" text-anchor="middle" font-family="Liberation Sans" fill="#555" transform="translate(12.5 279.4) rotate(-90)">1</text><path d="M7 286.1 H9" stroke="#888" stroke-width="1"/><path d="M4 292.8 H11" stroke="#666" stroke-width="1"/><path d="M7 299.4 H9" stroke="#888" stroke-width="1"/><text x="0" y="0" font-size="12.5" text-anchor="middle" font-family="Liberation Sans" fill="#555" transform="translate(12.5 306.1) rotate(-90)">2</text><path d="M7 312.8 H9" stroke="#888" stroke-width="1"/><path d="M4 319.5 H11" stroke="#666" stroke-width="1"/><path d="M7 326.1 H9" stroke="#888" stroke-width="1"/><text x="0" y="0" font-size="12.5" text-anchor="middle" font-family="Liberation Sans" fill="#555" transform="translate(12.5 332.8) rotate(-90)">3</text><path d="M7 339.5 H9" stroke="#888" stroke-width="1"/><path d="M4 346.2 H11" stroke="#666" stroke-width="1"/><path d="M7 352.8 H9" stroke="#888" stroke-width="1"/><text x="0" y="0" font-size="12.5" text-anchor="middle" font-family="Liberation Sans" fill="#555" transform="translate(12.5 359.5) rotate(-90)">4</text><path d="M7 366.2 H9" stroke="#888" stroke-width="1"/><path d="M4 372.9 H11" stroke="#666" stroke-width="1"/><path d="M7 379.5 H9" stroke="#888" stroke-width="1"/><text x="0" y="0" font-size="12.5" text-anchor="middle" font-family="Liberation Sans" fill="#555" transform="translate(12.5 386.2) rotate(-90)">5</text><path d="M7 392.9 H9" stroke="#888" stroke-width="1"/><path d="M4 399.6 H11" stroke="#666" stroke-width="1"/><path d="M7 406.2 H9" stroke="#888" stroke-width="1"/><text x="0" y="0" font-size="12.5" text-anchor="middle" font-family="Liberation Sans" fill="#555" transform="translate(12.5 412.9) rotate(-90)">6</text><path d="M7 419.6 H9" stroke="#888" stroke-width="1"/><path d="M4 426.3 H11" stroke="#666" stroke-width="1"/><path d="M7 432.9 H9" stroke="#888" stroke-width="1"/><text x="0" y="0" font-size="12.5" text-anchor="middle" font-family="Liberation Sans" fill="#555" transform="translate(12.5 439.6) rotate(-90)">7</text><path d="M7 446.3 H9" stroke="#888" stroke-width="1"/><path d="M4 453.0 H11" stroke="#666" stroke-width="1"/><path d="M7 459.6 H9" stroke="#888" stroke-width="1"/><text x="0" y="0" font-size="12.5" text-anchor="middle" font-family="Liberation Sans" fill="#555" transform="translate(12.5 466.3) rotate(-90)">8</text><path d="M7 473.0 H9" stroke="#888" stroke-width="1"/><path d="M4 479.7 H11" stroke="#666" stroke-width="1"/><path d="M7 486.3 H9" stroke="#888" stroke-width="1"/><text x="0" y="0" font-size="12.5" text-anchor="middle" font-family="Liberation Sans" fill="#555" transform="translate(12.5 493.0) rotate(-90)">9</text><path d="M7 499.7 H9" stroke="#888" stroke-width="1"/><path d="M7 486.3 H9" stroke="#888" stroke-width="1"/><path d="M4 479.6 H11" stroke="#666" stroke-width="1"/><path d="M7 473.0 H9" stroke="#888" stroke-width="1"/></svg>
<div class="a" style="left:1494px;top:308px;width:4px;height:553px;background:linear-gradient(90deg,#e6e6e6,#ededed)"></div>
<div class="a" style="left:1498px;top:308px;width:20px;height:553px;background:#f1f1f1"></div>
<div class="a" style="left:1498px;top:309px;width:19px;height:19px;background:#fff;border:1px solid #c6c6c6"></div>
<svg class="a" style="left:1502px;top:315px;" width="11" height="7" viewBox="0 0 11 7"><path d="M0.5 6 L5.5 1 L10.5 6Z" fill="#222"/></svg>
<div class="a" style="left:1498px;top:435px;width:19px;height:20px;background:#fff;border:1px solid #c6c6c6"></div>
<div class="a" style="left:1498px;top:778px;width:19px;height:18px;background:#fff;border:1px solid #c6c6c6"></div>
<svg class="a" style="left:1502px;top:784px;" width="11" height="7" viewBox="0 0 11 7"><path d="M0.5 1 L5.5 6 L10.5 1Z" fill="#222"/></svg>
<svg class="a" style="left:1500px;top:800px;" width="15" height="18" viewBox="0 0 15 18"><path d="M7.5 1 L13.5 8 H1.5Z M7.5 8 L13.5 15 H1.5Z" fill="#555"/></svg>
<svg class="a" style="left:1500px;top:820px;" width="15" height="18" viewBox="0 0 15 18"><path d="M7.5 8 L13.5 1 H1.5Z M7.5 15 L13.5 8 H1.5Z" fill="#555"/></svg>
<div class="a" style="left:1518px;top:308px;width:1px;height:592px;background:#c8c8c8"></div>
<div class="a" style="left:395px;top:851px;width:913px;height:8px;background:#f2f2f4"></div>
<div class="a" style="left:376px;top:335px;width:936px;height:516px;background:#fff"></div>
<svg class="a" style="left:0;top:0" width="1920" height="1019" viewBox="0 0 1920 1019"><defs><clipPath id="sc"><rect x="376" y="335" width="936" height="516"/></clipPath></defs><g clip-path="url(#sc)"><g fill="#f8f8fa"><rect x="1048" y="412" width="206" height="30"/><rect x="1067" y="384" width="60" height="28"/><rect x="1175" y="384" width="67" height="58"/><rect x="1187" y="365" width="13" height="19"/><rect x="1199" y="443" width="11" height="24"/><rect x="470" y="365" width="137" height="150" fill="#fbfbfc"/></g><path d="M1048 439 H1254" stroke="#f3f3f5" stroke-width="5"/><polygon points="550.0,612.0 549.4,619.8 539.9,625.0 537.4,631.1 540.5,641.4 535.4,647.4 524.7,646.0 519.1,649.4 515.5,659.6 507.8,661.4 500.0,654.0 493.4,653.5 484.5,659.6 477.3,656.6 475.3,646.0 470.3,641.7 459.5,641.4 455.4,634.7 460.1,625.0 458.5,618.6 450.0,612.0 450.6,604.2 460.1,599.0 462.6,592.9 459.5,582.6 464.6,576.6 475.3,578.0 480.9,574.6 484.5,564.4 492.2,562.6 500.0,570.0 506.6,570.5 515.5,564.4 522.7,567.4 524.7,578.0 529.7,582.3 540.5,582.6 544.6,589.3 539.9,599.0 541.5,605.4" fill="#fafafb" opacity="1"/><circle cx="500" cy="612" r="22" fill="#fff"/><polygon points="832.0,662.0 831.4,669.3 822.9,674.0 820.3,679.5 822.2,689.0 817.0,694.2 807.5,692.3 802.0,694.9 797.3,703.4 790.0,704.0 783.9,696.5 778.0,694.9 769.0,698.4 763.0,694.2 763.2,684.5 759.7,679.5 750.5,676.4 748.6,669.3 755.0,662.0 755.5,655.9 750.5,647.6 753.6,641.0 763.2,639.5 767.5,635.2 769.0,625.6 775.6,622.5 783.9,627.5 790.0,627.0 797.3,620.6 804.4,622.5 807.5,631.7 812.5,635.2 822.2,635.0 826.4,641.0 822.9,650.0 824.5,655.9" fill="#f9f9fa" opacity="1"/><circle cx="790" cy="662" r="18" fill="#fff"/><polygon points="906.0,606.0 905.3,614.0 895.7,619.0 892.9,625.0 895.2,635.6 889.6,641.2 879.0,638.9 873.0,641.7 868.0,651.3 860.0,652.0 853.4,643.4 847.0,641.7 837.0,645.8 830.4,641.2 830.9,630.4 827.1,625.0 816.8,621.7 814.7,614.0 822.0,606.0 822.6,599.4 816.8,590.3 820.2,583.0 830.9,581.6 835.6,576.9 837.0,566.2 844.3,562.8 853.4,568.6 860.0,568.0 868.0,560.7 875.7,562.8 879.0,573.1 884.4,576.9 895.2,576.4 899.8,583.0 895.7,593.0 897.4,599.4" fill="#f6caca" opacity="1"/><g fill="none" stroke="#c9c9cc" stroke-width="1"><path d="M652 675 Q720 700 768 640"/><path d="M668 690 Q745 705 790 655"/></g><path d="M566 578 L675 628 L692 705 L672 792 L600 794 L618 712 L605 640 L560 705 L518 792 L468 790 L528 702 Z" fill="#adb1b6"/><path d="M572 585 Q580 560 600 540 L631 511 L727 511 L748 590 L690 612 L672 632 Z" fill="#c0c4c8"/><polygon points="764.0,608.0 763.3,616.9 751.7,622.5 748.9,629.3 753.1,641.5 747.3,648.3 734.6,646.0 728.3,649.9 724.6,662.2 715.9,664.3 707.0,655.0 699.6,654.4 689.4,662.2 681.1,658.8 679.4,646.0 673.8,641.2 660.9,641.5 656.2,633.9 662.3,622.5 660.6,615.4 650.0,608.0 650.7,599.1 662.3,593.5 665.1,586.7 660.9,574.5 666.7,567.7 679.4,570.0 685.7,566.1 689.4,553.8 698.1,551.7 707.0,561.0 714.4,561.6 724.6,553.8 732.9,557.2 734.6,570.0 740.2,574.8 753.1,574.5 757.8,582.1 751.7,593.5 753.4,600.6" fill="#f6c6c6" opacity="1"/><g fill="none" stroke="#fff" stroke-width="1.2" opacity=".95"><circle cx="704" cy="605" r="7"/><circle cx="704" cy="605" r="15"/><circle cx="704" cy="605" r="24"/><circle cx="704" cy="605" r="33"/></g><path d="M660 606 H700" stroke="#fff" stroke-width="2.2"/><path d="M693 600 L703 605 L693 611Z" fill="#fff"/><path d="M700 511 L727 511 L812 547 L815 581 L752 591 L722 586 Z" fill="#c0c4c8"/><path d="M811 546 Q836 540 842 556 Q846 576 826 584 L812 582 Z" fill="#f9e6e2"/><path d="M738 444 Q758 436 778 446 Q782 466 772 474 Q750 478 740 466 Z" fill="#f9efec"/><path d="M720 442 Q712 428 726 420 Q732 410 748 414 Q760 406 772 414 Q788 410 792 424 Q802 432 794 444 Q798 456 786 458 Q780 448 766 446 Q750 442 740 446 Q736 462 726 456 Q714 452 720 442Z" fill="#b3b7bc"/><path d="M748 452 Q754 449 760 452" stroke="#777" stroke-width="1" fill="none"/><circle cx="765" cy="461" r="1.8" fill="#666"/><path d="M744 470 Q750 474 756 471" stroke="#999" stroke-width="1" fill="none"/><path d="M462 800 L518 790 L520 812 L510 836 Z" fill="#f4bdb9"/><path d="M462 800 L510 836 L506 838 L458 806Z" fill="#c8aaa8"/><path d="M598 794 L648 796 L662 818 L598 818 Z" fill="#f4bdb9"/><path d="M598 816 H662 V821 H598Z" fill="#b9abab"/><rect x="811" y="477" width="32" height="34" fill="#f8d6d6"/><path d="M815 508 L840 482" stroke="#fff" stroke-width="3"/><rect x="961" y="808" width="56" height="13" fill="#f6cccc"/><path d="M947 692 L955 705 M1030 692 L1026 705" stroke="#c4c4c6" stroke-width="6"/><path d="M458 821 H1230" stroke="#e6e6e8" stroke-width="1.2"/></g></svg>
<div class="a" style="left:403px;top:377px;width:35px;height:40px;background:#fec000"></div>
<div class="a" style="left:438px;top:377px;width:461px;height:40px;background:#0b2262"></div>
<div class="t" style="left:448.0px;top:384.6px;font-size:25.1px;color:#fff;font-weight:bold">DETAIL PERUBAHAN PENGATURAN</div>
<div class="a" style="left:1270px;top:381px;width:70px;height:38px;background:#fec000;border-radius:7px"></div>
<div class="t" style="left:1284.0px;top:392.5px;font-size:16px;color:#111;font-weight:bold">6</div>
<div class="a" style="left:469px;top:436px;width:270px;height:75px;background:#0b2262;border-radius:6px 6px 0 7px"></div>
<div class="t" style="left:498.0px;top:447.6px;font-size:17.8px;color:#fff;font-weight:bold">PERUBAHAN</div>
<div class="a" style="left:485px;top:471px;width:326px;height:40px;background:#fff;box-shadow:2px 3px 3px rgba(0,0,0,.28)"></div>
<div class="t" style="left:491.7px;top:482.8px;font-size:12.85px;color:#111;font-weight:bold">Sarana <span style="text-decoration:underline wavy #e87070;text-decoration-thickness:0.7px;text-underline-offset:1.5px">Penyampaian</span> SPT <span style="text-decoration:underline wavy #e87070;text-decoration-thickness:0.7px;text-underline-offset:1.5px">PPh</span> 21/26</div>
<div class="a" style="left:469px;top:706px;width:270px;height:74px;background:#0b2262;border-radius:6px 6px 0 7px"></div>
<div class="t" style="left:498.0px;top:717.2px;font-size:17.8px;color:#fff;font-weight:bold">PERUBAHAN</div>
<div class="a" style="left:485px;top:740px;width:327px;height:39px;background:#fff;box-shadow:2px 3px 3px rgba(0,0,0,.28)"></div>
<div class="t" style="left:492.2px;top:753.0px;font-size:12.8px;color:#111;font-weight:bold"><span style="text-decoration:underline wavy #e87070;text-decoration-thickness:0.7px;text-underline-offset:1.5px">Penambahan</span> <span style="text-decoration:underline wavy #e87070;text-decoration-thickness:0.7px;text-underline-offset:1.5px">Jenis</span> Bukti <span style="text-decoration:underline wavy #e87070;text-decoration-thickness:0.7px;text-underline-offset:1.5px">Potong</span></div>
<div class="a" style="left:842px;top:436px;width:270px;height:60px;background:#fec000;border-radius:7px 7px 0 0"></div>
<div class="a" style="left:842px;top:460px;width:40px;height:230px;background:#fec000;border-radius:0 0 0 8px"></div>
<div class="t" style="left:865.2px;top:445.0px;font-size:17.7px;color:#0d1f4f;font-weight:bold">DETAIL PERUBAHAN</div>
<div class="a" style="left:863px;top:468px;width:356px;height:224px;background:#fff;box-shadow:2px 3px 3px rgba(0,0,0,.28)"></div>
<div class="t" style="left:891.3px;top:479.1px;width:321px;font-size:13.1px;color:#111;word-spacing:-1.6px;text-align:justify;text-align-last:justify"><span style="text-decoration:underline wavy #e87070;text-decoration-thickness:0.7px;text-underline-offset:1.5px">Aplikasi</span> <i>e-SPT Desktop</i> <span style="text-decoration:underline wavy #e87070;text-decoration-thickness:0.7px;text-underline-offset:1.5px">menjadi</span> <i>e-SPT Web</i> pada <span style="text-decoration:underline wavy #e87070;text-decoration-thickness:0.7px;text-underline-offset:1.5px">laman</span></div>
<div class="t" style="left:891.3px;top:494.9px;width:321px;font-size:13.1px;color:#111">DJP Online</div>
<div class="t" style="left:891.3px;top:510.7px;width:321px;font-size:13.1px;color:#111;text-align:justify;text-align-last:justify"><span style="text-decoration:underline wavy #e87070;text-decoration-thickness:0.7px;text-underline-offset:1.5px">Penyampaian</span> SPT <span style="text-decoration:underline wavy #e87070;text-decoration-thickness:0.7px;text-underline-offset:1.5px">dalam</span> <span style="text-decoration:underline wavy #e87070;text-decoration-thickness:0.7px;text-underline-offset:1.5px">bentuk</span> <span style="text-decoration:underline wavy #e87070;text-decoration-thickness:0.7px;text-underline-offset:1.5px">kertas</span> <span style="text-decoration:underline wavy #e87070;text-decoration-thickness:0.7px;text-underline-offset:1.5px">masih</span> <span style="text-decoration:underline wavy #e87070;text-decoration-thickness:0.7px;text-underline-offset:1.5px">tetap</span></div>
<div class="t" style="left:891.3px;top:526.5px;width:321px;font-size:13.1px;color:#111"><span style="text-decoration:underline wavy #e87070;text-decoration-thickness:0.7px;text-underline-offset:1.5px">disediakan</span> <span style="text-decoration:underline wavy #e87070;text-decoration-thickness:0.7px;text-underline-offset:1.5px">untuk</span> <span style="text-decoration:underline wavy #e87070;text-decoration-thickness:0.7px;text-underline-offset:1.5px">kondisi</span> <span style="text-decoration:underline wavy #e87070;text-decoration-thickness:0.7px;text-underline-offset:1.5px">tertentu</span></div>
<div class="t" style="left:891.3px;top:542.3px;width:321px;font-size:13.1px;color:#111;text-align:justify;text-align-last:justify"><span style="text-decoration:underline wavy #e87070;text-decoration-thickness:0.7px;text-underline-offset:1.5px">Penyampaian</span> <i>e-SPT</i> <span style="text-decoration:underline wavy #e87070;text-decoration-thickness:0.7px;text-underline-offset:1.5px">melalui</span> media <span style="text-decoration:underline wavy #e87070;text-decoration-thickness:0.7px;text-underline-offset:1.5px">elektronik</span> <span style="text-decoration:underline wavy #e87070;text-decoration-thickness:0.7px;text-underline-offset:1.5px">tidak</span></div>
<div class="t" style="left:891.3px;top:558.1px;width:321px;font-size:13.1px;color:#111;word-spacing:-1.0px;text-align:justify;text-align-last:justify"><span style="text-decoration:underline wavy #e87070;text-decoration-thickness:0.7px;text-underline-offset:1.5px">disediakan</span> <span style="text-decoration:underline wavy #e87070;text-decoration-thickness:0.7px;text-underline-offset:1.5px">karena</span> <span style="text-decoration:underline wavy #e87070;text-decoration-thickness:0.7px;text-underline-offset:1.5px">tidak</span> <span style="text-decoration:underline wavy #e87070;text-decoration-thickness:0.7px;text-underline-offset:1.5px">relevan</span> <span style="text-decoration:underline wavy #e87070;text-decoration-thickness:0.7px;text-underline-offset:1.5px">dengan</span> <i>e-SPT</i> <span style="text-decoration:underline wavy #e87070;text-decoration-thickness:0.7px;text-underline-offset:1.5px">berbasis</span></div>
<div class="t" style="left:891.3px;top:573.9px;width:321px;font-size:13.1px;color:#111">web</div>
<div class="t" style="left:891.3px;top:590.1px;width:321px;font-size:13.1px;color:#111;text-align:justify;text-align-last:justify"><span style="text-decoration:underline wavy #e87070;text-decoration-thickness:0.7px;text-underline-offset:1.5px">Terdapat</span> <span style="text-decoration:underline wavy #e87070;text-decoration-thickness:0.7px;text-underline-offset:1.5px">fitur</span> import &nbsp;<span style="text-decoration:underline wavy #e87070;text-decoration-thickness:0.7px;text-underline-offset:1.5px">dalam</span> format excel <span style="text-decoration:underline wavy #e87070;text-decoration-thickness:0.7px;text-underline-offset:1.5px">untuk</span></div>
<div class="t" style="left:891.3px;top:605.4px;width:321px;font-size:13.1px;color:#111"><span style="text-decoration:underline wavy #e87070;text-decoration-thickness:0.7px;text-underline-offset:1.5px">membantu</span> <span style="text-decoration:underline wavy #e87070;text-decoration-thickness:0.7px;text-underline-offset:1.5px">Wajib</span> <span style="text-decoration:underline wavy #e87070;text-decoration-thickness:0.7px;text-underline-offset:1.5px">Pajak</span>:</div>
<div class="t" style="left:903.5px;top:620.9px;width:30px;font-size:13.1px;color:#111">1.</div>
<div class="t" style="left:929.5px;top:620.9px;width:283px;font-size:13.1px;color:#111"><span style="text-decoration:underline wavy #e87070;text-decoration-thickness:0.7px;text-underline-offset:1.5px">mengisi</span> SPT <span style="text-decoration:underline wavy #e87070;text-decoration-thickness:0.7px;text-underline-offset:1.5px">secara</span> offline;</div>
<div class="t" style="left:903.5px;top:636.6px;width:30px;font-size:13.1px;color:#111">2.</div>
<div class="t" style="left:929.5px;top:636.6px;width:283px;font-size:13.1px;color:#111"><span style="text-decoration:underline wavy #e87070;text-decoration-thickness:0.7px;text-underline-offset:1.5px">menginput</span> <span style="text-decoration:underline wavy #e87070;text-decoration-thickness:0.7px;text-underline-offset:1.5px">bukti</span> <span style="text-decoration:underline wavy #e87070;text-decoration-thickness:0.7px;text-underline-offset:1.5px">potong</span> <span style="text-decoration:underline wavy #e87070;text-decoration-thickness:0.7px;text-underline-offset:1.5px">dalam</span> <span style="text-decoration:underline wavy #e87070;text-decoration-thickness:0.7px;text-underline-offset:1.5px">jumlah</span> <span style="text-decoration:underline wavy #e87070;text-decoration-thickness:0.7px;text-underline-offset:1.5px">banyak</span>;</div>
<div class="t" style="left:903.5px;top:652.5px;width:30px;font-size:13.1px;color:#111">3.</div>
<div class="t" style="left:929.5px;top:652.5px;width:283px;font-size:13.1px;color:#111;text-align:justify;text-align-last:justify"><span style="text-decoration:underline wavy #e87070;text-decoration-thickness:0.7px;text-underline-offset:1.5px">mencetak</span> <span style="text-decoration:underline wavy #e87070;text-decoration-thickness:0.7px;text-underline-offset:1.5px">bukti</span> <span style="text-decoration:underline wavy #e87070;text-decoration-thickness:0.7px;text-underline-offset:1.5px">potong</span> <span style="text-decoration:underline wavy #e87070;text-decoration-thickness:0.7px;text-underline-offset:1.5px">bagi</span> WP yang <span style="text-decoration:underline wavy #e87070;text-decoration-thickness:0.7px;text-underline-offset:1.5px">masih</span></div>
<div class="t" style="left:929.5px;top:668.2px;width:283px;font-size:13.1px;color:#111"><span style="text-decoration:underline wavy #e87070;text-decoration-thickness:0.7px;text-underline-offset:1.5px">menggunakan</span> <span style="text-decoration:underline wavy #e87070;text-decoration-thickness:0.7px;text-underline-offset:1.5px">formulir</span> <span style="text-decoration:underline wavy #e87070;text-decoration-thickness:0.7px;text-underline-offset:1.5px">kertas</span>.</div>
<div class="a" style="left:871px;top:483px;width:4px;height:4px;background:#111"></div>
<div class="a" style="left:871px;top:515px;width:4px;height:4px;background:#111"></div>
<div class="a" style="left:871px;top:546px;width:4px;height:4px;background:#111"></div>
<div class="a" style="left:871px;top:594px;width:4px;height:4px;background:#111"></div>
<div class="a" style="left:842px;top:705px;width:270px;height:50px;background:#fec000;border-radius:7px 7px 0 0"></div>
<div class="a" style="left:842px;top:730px;width:40px;height:76px;background:#fec000;border-radius:0 0 0 8px"></div>
<div class="t" style="left:865.3px;top:715.2px;font-size:17.7px;color:#0d1f4f;font-weight:bold">DETAIL PERUBAHAN</div>
<div class="a" style="left:863px;top:738px;width:356px;height:72px;background:#fff;box-shadow:2px 3px 3px rgba(0,0,0,.28)"></div>
<div class="t" style="left:870.3px;top:752.1px;width:342px;font-size:13.1px;color:#111;text-align:justify;text-align-last:justify"><span style="text-decoration:underline wavy #e87070;text-decoration-thickness:0.7px;text-underline-offset:1.5px">Penambahan</span> Bukti <span style="text-decoration:underline wavy #e87070;text-decoration-thickness:0.7px;text-underline-offset:1.5px">Pemotongan</span> PPh <span style="text-decoration:underline wavy #e87070;text-decoration-thickness:0.7px;text-underline-offset:1.5px">Pasal</span> 21 <span style="text-decoration:underline wavy #e87070;text-decoration-thickness:0.7px;text-underline-offset:1.5px">Bulanan</span></div>
<div class="t" style="left:870.3px;top:768.3px;width:342px;font-size:13.1px;color:#111;text-align:justify;text-align-last:justify">(<span style="text-decoration:underline wavy #e87070;text-decoration-thickness:0.7px;text-underline-offset:1.5px">Formulir</span> 1721-VIII) <span style="text-decoration:underline wavy #e87070;text-decoration-thickness:0.7px;text-underline-offset:1.5px">bagi</span> <span style="text-decoration:underline wavy #e87070;text-decoration-thickness:0.7px;text-underline-offset:1.5px">Pegawai</span> <span style="text-decoration:underline wavy #e87070;text-decoration-thickness:0.7px;text-underline-offset:1.5px">Tetap</span> <span style="text-decoration:underline wavy #e87070;text-decoration-thickness:0.7px;text-underline-offset:1.5px">atau</span> <span style="text-decoration:underline wavy #e87070;text-decoration-thickness:0.7px;text-underline-offset:1.5px">Pensiunan</span></div>
<div class="t" style="left:870.3px;top:784.5px;width:342px;font-size:13.1px;color:#111">yang <span style="text-decoration:underline wavy #e87070;text-decoration-thickness:0.7px;text-underline-offset:1.5px">menerima</span> uang <span style="text-decoration:underline wavy #e87070;text-decoration-thickness:0.7px;text-underline-offset:1.5px">terkait</span> <span style="text-decoration:underline wavy #e87070;text-decoration-thickness:0.7px;text-underline-offset:1.5px">pensiun</span> <span style="text-decoration:underline wavy #e87070;text-decoration-thickness:0.7px;text-underline-offset:1.5px">secara</span> <span style="text-decoration:underline wavy #e87070;text-decoration-thickness:0.7px;text-underline-offset:1.5px">berkala</span>.</div>
<div class="a" style="left:910px;top:833px;width:98px;height:4px;background:#0b2262"></div>
<div class="a" style="left:1008px;top:833px;width:196px;height:4px;background:linear-gradient(90deg,#f5bf10,#f3e040)"></div>
<div class="t" style="left:1212.8px;top:830.2px;font-size:10.4px;color:#333">www.pajak.go.id</div>

<div class="a" style="left:188px;top:861px;width:1331px;height:39px;background:#e6e6e6;border-top:1px solid #c8c8c8"></div>
<div class="t" style="left:197.0px;top:871.1px;font-size:17.3px;color:#595959">Click to add notes</div>
<div class="a" style="left:1498px;top:864px;width:19px;height:17px;background:#fff;border:1px solid #c6c6c6"></div>
<svg class="a" style="left:1503px;top:869px;" width="10" height="6" viewBox="0 0 10 6"><path d="M0.5 5.5 L5 1 L9.5 5.5Z" fill="#222"/></svg>
<div class="a" style="left:1498px;top:882px;width:19px;height:17px;background:#fff;border:1px solid #c6c6c6"></div>
<svg class="a" style="left:1503px;top:887px;" width="10" height="6" viewBox="0 0 10 6"><path d="M0.5 0.5 L5 5 L9.5 0.5Z" fill="#222"/></svg>
<div class="a" style="left:8px;top:900px;width:1511px;height:26px;background:#f3f3f3;border-top:1px solid #d4d4d4"></div>
<div class="t" style="left:21.3px;top:908.0px;font-size:12.2px;color:#444">Slide 6 of 21</div>
<svg class="a" style="left:110px;top:905px;" width="19" height="15" viewBox="0 0 19 15"><path d="M1 2 H8 Q9.5 2 9.5 3.5 V14 Q9.5 12.5 8 12.5 H1Z M9.5 3.5 Q9.5 2 11 2 H18 V12.5 H11 Q9.5 12.5 9.5 14" fill="none" stroke="#666" stroke-width="1"/><path d="M12 10 L16.5 5.5 L17.5 6.5 L13 11 L11.5 11.5Z" fill="#666"/></svg>
<div class="t" style="left:147.7px;top:908.2px;font-size:11.9px;color:#444">English (Indonesia)</div>
<svg class="a" style="left:268px;top:904px;" width="20" height="18" viewBox="0 0 20 18"><circle cx="9" cy="8" r="7" fill="none" stroke="#444" stroke-width="1.2" stroke-dasharray="4 2"/><path d="M9 2 V8 L13 12" fill="none" stroke="#444" stroke-width="1.2"/><path d="M11 11 L18 17 M18 11 L11 17" stroke="#333" stroke-width="1.4"/></svg>
<div class="t" style="left:290.0px;top:907.9px;font-size:12.3px;color:#262626;font-weight:bold">Accessibility: Investigate</div>
<svg class="a" style="left:924px;top:905px;" width="16" height="15" viewBox="0 0 16 15"><path d="M8 1 L11 4 H5Z" fill="#777"/><path d="M1 7 H15 M1 10 H15 M1 13 H15" stroke="#777" stroke-width="1.2"/></svg>
<div class="t" style="left:945.0px;top:907.6px;font-size:12.6px;color:#444">Notes</div>
<svg class="a" style="left:998px;top:905px;" width="18" height="16" viewBox="0 0 18 16"><path d="M1 1 H17 V11 H7 L3.5 15 V11 H1Z" fill="#666"/></svg>
<div class="t" style="left:1019.3px;top:908.0px;font-size:12.2px;color:#444">Comments</div>
<div class="a" style="left:1100px;top:901px;width:47px;height:25px;background:#d2d2d2"></div>
<svg class="a" style="left:1116px;top:906px;" width="17" height="15" viewBox="0 0 17 15"><rect x="0.5" y="0.5" width="15" height="13" fill="none" stroke="#777" stroke-width="1"/><rect x="5" y="3" width="6" height="5" fill="none" stroke="#777" stroke-width="1"/><path d="M3 10.5 H13" stroke="#777" stroke-width="1"/></svg>
<svg class="a" style="left:1163px;top:905px;" width="17" height="16" viewBox="0 0 17 16"><rect x="0.5" y="0.5" width="6.5" height="6" fill="none" stroke="#777" stroke-width="1"/><rect x="9" y="0.5" width="6.5" height="6" fill="none" stroke="#777" stroke-width="1"/><rect x="0.5" y="8.5" width="6.5" height="6" fill="none" stroke="#777" stroke-width="1"/><rect x="9" y="8.5" width="6.5" height="6" fill="none" stroke="#777" stroke-width="1"/></svg>
<svg class="a" style="left:1210px;top:905px;" width="17" height="16" viewBox="0 0 17 16"><path d="M0.5 1 H7.5 Q8.5 1 8.5 2 V15 M8.5 2 Q8.5 1 9.5 1 H16 V14 H9.5 L8.5 15 L7.5 14 H0.5Z" fill="none" stroke="#777" stroke-width="1"/><path d="M2.5 4 H6.5 M2.5 7 H6.5 M2.5 10 H6.5 M10.5 4 H14 M10.5 7 H14 M10.5 10 H14" stroke="#888" stroke-width="1"/></svg>
<svg class="a" style="left:1258px;top:904px;" width="16" height="18" viewBox="0 0 16 18"><path d="M0.5 1.5 H15" stroke="#777" stroke-width="1.3"/><rect x="2" y="2.5" width="12" height="8" fill="none" stroke="#777" stroke-width="1"/><path d="M5 5.5 H11" stroke="#777" stroke-width="1"/><path d="M8 10.5 V16 M5 16.5 H11" stroke="#777" stroke-width="1"/></svg>
<div class="a" style="left:1295px;top:912.5px;width:9px;height:1.5px;background:#888"></div>
<div class="a" style="left:1311px;top:912.5px;width:117px;height:1.3px;background:#444"></div>
<div class="a" style="left:1369px;top:909px;width:1px;height:8px;background:#444"></div>
<div class="a" style="left:1342px;top:905px;width:6px;height:15px;background:#444"></div>
<svg class="a" style="left:1433px;top:908px;" width="11" height="11" viewBox="0 0 11 11"><path d="M5.5 0 V11 M0 5.5 H11" stroke="#777" stroke-width="1.2"/></svg>
<div class="t" style="left:1457.7px;top:907.8px;font-size:12.4px;color:#444">60%</div>
<svg class="a" style="left:1500px;top:906px;" width="12" height="13" viewBox="0 0 12 13"><rect x="0.5" y="0.5" width="11" height="11.5" fill="none" stroke="#666" stroke-width="1"/><path d="M6 2 V4 M6 8.5 V10.5 M2 6.2 H4 M8 6.2 H10" stroke="#888" stroke-width="1.2"/></svg>
<div id="video" class="a" style="left:1534px;top:418px;width:379px;height:214px;background:#e8e8e6;overflow:hidden">
<svg width="379" height="214" viewBox="0 0 379 214"><defs><linearGradient id="pg" x1="0" y1="0" x2="1" y2="1"><stop offset="0" stop-color="#f5f5f4"/><stop offset=".5" stop-color="#f2f2f1"/><stop offset="1" stop-color="#ededec"/></linearGradient></defs><rect width="379" height="214" fill="url(#pg)"/><polygon points="66,117 84,85 41,131" fill="#fbfbfa" opacity=".45"/><polygon points="216,28 204,20 226,10" fill="#e6e6e5" opacity=".45"/><polygon points="344,116 297,121 334,94" fill="#fafaf9" opacity=".45"/><polygon points="316,70 302,62 304,58" fill="#f4f4f3" opacity=".45"/><polygon points="184,180 132,188 190,201" fill="#fbfbfa" opacity=".45"/><polygon points="154,182 142,164 137,205" fill="#fafaf9" opacity=".45"/><polygon points="335,198 348,246 351,222" fill="#e6e6e5" opacity=".45"/><polygon points="217,195 232,225 232,208" fill="#fafaf9" opacity=".45"/><polygon points="130,32 170,-11 152,-11" fill="#f4f4f3" opacity=".45"/><polygon points="146,192 147,180 83,197" fill="#fafaf9" opacity=".45"/><polygon points="345,199 373,242 348,205" fill="#e6e6e5" opacity=".45"/><polygon points="336,72 349,76 343,78" fill="#f4f4f3" opacity=".45"/><polygon points="104,158 84,118 75,123" fill="#ebebea" opacity=".45"/><polygon points="366,61 349,64 363,47" fill="#fbfbfa" opacity=".45"/><polygon points="223,52 255,18 214,55" fill="#fbfbfa" opacity=".45"/><polygon points="208,46 208,63 203,49" fill="#fafaf9" opacity=".45"/><polygon points="343,144 379,130 356,155" fill="#fafaf9" opacity=".45"/><polygon points="9,77 16,79 -2,47" fill="#e6e6e5" opacity=".45"/><polygon points="315,66 336,70 355,109" fill="#e6e6e5" opacity=".45"/><polygon points="348,37 334,67 320,63" fill="#fbfbfa" opacity=".45"/><polygon points="151,136 133,127 145,131" fill="#f4f4f3" opacity=".45"/><polygon points="406,110 355,99 398,94" fill="#f4f4f3" opacity=".45"/><polygon points="393,132 390,139 339,95" fill="#fafaf9" opacity=".45"/><polygon points="371,170 369,151 307,161" fill="#e6e6e5" opacity=".45"/><polygon points="148,40 150,62 154,15" fill="#f4f4f3" opacity=".45"/><polygon points="161,150 173,187 148,185" fill="#e6e6e5" opacity=".45"/><polygon points="318,4 278,-32 293,-17" fill="#ebebea" opacity=".45"/><polygon points="23,79 20,30 -31,57" fill="#fafaf9" opacity=".45"/><polygon points="322,-10 309,-8 332,6" fill="#fbfbfa" opacity=".45"/><polygon points="81,195 51,231 107,221" fill="#fafaf9" opacity=".45"/><polygon points="149,118 150,132 125,117" fill="#ebebea" opacity=".45"/><polygon points="316,51 250,39 268,61" fill="#ebebea" opacity=".45"/><polygon points="37,1 103,15 96,-11" fill="#fafaf9" opacity=".45"/><polygon points="380,157 347,132 343,157" fill="#f4f4f3" opacity=".45"/><polygon points="248,87 269,98 278,86" fill="#fafaf9" opacity=".45"/><polygon points="83,161 115,196 102,173" fill="#fafaf9" opacity=".45"/><polygon points="-5,177 -33,179 25,138" fill="#fbfbfa" opacity=".45"/><polygon points="298,53 338,21 342,50" fill="#fbfbfa" opacity=".45"/><polygon points="117,70 98,75 160,70" fill="#e6e6e5" opacity=".45"/><polygon points="152,142 159,96 139,140" fill="#e6e6e5" opacity=".45"/><polygon points="48,161 14,173 -4,146" fill="#e6e6e5" opacity=".45"/><polygon points="69,125 41,121 51,125" fill="#f4f4f3" opacity=".45"/><polygon points="305,103 288,119 313,101" fill="#fbfbfa" opacity=".45"/><polygon points="101,91 89,108 55,101" fill="#f4f4f3" opacity=".45"/><polygon points="-39,245 11,241 -41,243" fill="#e6e6e5" opacity=".45"/><polygon points="209,150 222,190 259,145" fill="#f4f4f3" opacity=".45"/><polygon points="290,171 287,175 257,200" fill="#fafaf9" opacity=".45"/><polygon points="56,16 24,57 16,15" fill="#fbfbfa" opacity=".45"/><polygon points="134,102 186,90 158,74" fill="#fbfbfa" opacity=".45"/><polygon points="6,85 -7,85 25,95" fill="#fbfbfa" opacity=".45"/><polygon points="295,60 304,37 301,79" fill="#f4f4f3" opacity=".45"/><polygon points="194,-2 210,18 199,-12" fill="#e6e6e5" opacity=".45"/><polygon points="63,171 82,172 40,207" fill="#f4f4f3" opacity=".45"/><polygon points="126,51 168,64 121,33" fill="#f4f4f3" opacity=".45"/><polygon points="187,143 189,180 165,158" fill="#e6e6e5" opacity=".45"/><polygon points="284,130 255,122 228,103" fill="#fafaf9" opacity=".45"/><polygon points="53,125 69,98 55,126" fill="#ebebea" opacity=".45"/><polygon points="313,138 299,141 308,164" fill="#e6e6e5" opacity=".45"/><polygon points="313,89 324,63 349,58" fill="#f4f4f3" opacity=".45"/><polygon points="106,112 132,110 71,81" fill="#fafaf9" opacity=".45"/><path d="M16 9 L24 14 L21.5 23 H10.5 L8 14Z" fill="#1f3a6e"/><path d="M16 12 L21 15 L19.5 21 H12.5 L11 15Z" fill="#d9b040"/><path d="M29.5 8 V26" stroke="#bbb" stroke-width=".8"/><path d="M44 13 H39 Q37 13 37 15 V19 Q37 21 39 21 H44 V17" fill="none" stroke="#1c1c1c" stroke-width="2.6"/><path d="M41 11.5 H45 V14" fill="none" stroke="#f2b705" stroke-width="2"/><text x="47.5" y="21" font-family="Liberation Sans" font-size="11" fill="#1c2440">djp</text><text x="253.5" y="16.5" font-family="Liberation Sans" font-size="8.9" font-weight="bold" fill="#1c2a60" textLength="120" lengthAdjust="spacingAndGlyphs">KPP Pratama Tanjung Redeb</text><text x="18" y="55" font-family="Liberation Sans" font-size="14.3" fill="#1e2858" letter-spacing="2.6">Kelas Pajak</text><text x="19.5" y="89" font-family="Liberation Sans" font-size="36" font-weight="bold" fill="#f2c230" stroke="#f2c230" stroke-width="1.8">D</text><text x="16.5" y="88" font-family="Liberation Sans" font-size="36" font-weight="bold" fill="#1b1f66" stroke="#1b1f66" stroke-width="1.8">D</text><text x="61" y="89" font-family="Liberation Sans" font-size="36" font-weight="bold" fill="#f2c230" stroke="#f2c230" stroke-width="1.8">A</text><text x="58" y="88" font-family="Liberation Sans" font-size="36" font-weight="bold" fill="#1b1f66" stroke="#1b1f66" stroke-width="1.8">A</text><text x="104" y="89" font-family="Liberation Sans" font-size="36" font-weight="bold" fill="#f2c230" stroke="#f2c230" stroke-width="1.8">R</text><text x="101" y="88" font-family="Liberation Sans" font-size="36" font-weight="bold" fill="#1b1f66" stroke="#1b1f66" stroke-width="1.8">R</text><text x="216" y="89" font-family="Liberation Sans" font-size="36" font-weight="bold" fill="#f2c230" stroke="#f2c230" stroke-width="1.8">G</text><text x="213" y="88" font-family="Liberation Sans" font-size="36" font-weight="bold" fill="#1b1f66" stroke="#1b1f66" stroke-width="1.8">G</text><defs><radialGradient id="fg" cx=".5" cy=".45" r=".6"><stop offset="0" stop-color="#cfc7bf"/><stop offset=".7" stop-color="#bfb4aa"/><stop offset="1" stop-color="#9c8e84"/></radialGradient></defs><clipPath id="shc"><path d="M72 214 Q90 186 120 170 Q142 160 160 166 Q170 190 183 202 Q196 190 204 166 Q222 160 256 170 Q290 184 306 214 Z"/></clipPath><path d="M160 150 L160 200 L206 200 L206 150 Z" fill="#9a8a7e"/><path d="M72 214 Q90 186 120 170 Q142 160 160 166 Q170 190 183 202 Q196 190 204 166 Q222 160 256 170 Q290 184 306 214 Z" fill="#6a4a24"/><g clip-path="url(#shc)"><path d="M87 200 Q92 199 92 203" stroke="#b07830" stroke-width="1.9" fill="none" opacity=".85" stroke-linecap="round"/><path d="M265 210 Q273 209 275 214" stroke="#d8a458" stroke-width="3.4" fill="none" opacity=".85" stroke-linecap="round"/><path d="M260 193 Q261 191 262 197" stroke="#1c1812" stroke-width="2.5" fill="none" opacity=".85" stroke-linecap="round"/><path d="M146 176 Q145 182 142 182" stroke="#2a2018" stroke-width="3.2" fill="none" opacity=".85" stroke-linecap="round"/><path d="M240 199 Q237 203 235 203" stroke="#2a2018" stroke-width="3.2" fill="none" opacity=".85" stroke-linecap="round"/><path d="M182 164 Q183 164 186 165" stroke="#1c1812" stroke-width="2.9" fill="none" opacity=".85" stroke-linecap="round"/><path d="M77 206 Q79 208 77 211" stroke="#c48e42" stroke-width="2.4" fill="none" opacity=".85" stroke-linecap="round"/><path d="M106 208 Q106 212 109 217" stroke="#4a3a28" stroke-width="2.4" fill="none" opacity=".85" stroke-linecap="round"/><path d="M304 203 Q303 202 307 208" stroke="#b07830" stroke-width="2.6" fill="none" opacity=".85" stroke-linecap="round"/><path d="M207 186 Q209 191 215 190" stroke="#9a6a30" stroke-width="2.4" fill="none" opacity=".85" stroke-linecap="round"/><path d="M162 176 Q159 174 159 179" stroke="#1c1812" stroke-width="2.3" fill="none" opacity=".85" stroke-linecap="round"/><path d="M303 170 Q300 176 304 175" stroke="#9a6a30" stroke-width="2.2" fill="none" opacity=".85" stroke-linecap="round"/><path d="M210 203 Q210 203 204 204" stroke="#b07830" stroke-width="3.1" fill="none" opacity=".85" stroke-linecap="round"/><path d="M201 160 Q200 164 195 160" stroke="#4a3a28" stroke-width="1.7" fill="none" opacity=".85" stroke-linecap="round"/><path d="M209 158 Q211 156 213 159" stroke="#9a6a30" stroke-width="2.5" fill="none" opacity=".85" stroke-linecap="round"/><path d="M188 177 Q188 184 181 184" stroke="#4a3a28" stroke-width="3.1" fill="none" opacity=".85" stroke-linecap="round"/><path d="M69 175 Q62 175 60 176" stroke="#2a2018" stroke-width="3.4" fill="none" opacity=".85" stroke-linecap="round"/><path d="M188 189 Q187 193 182 194" stroke="#5a5048" stroke-width="1.8" fill="none" opacity=".85" stroke-linecap="round"/><path d="M271 189 Q272 195 275 198" stroke="#5a5048" stroke-width="2.4" fill="none" opacity=".85" stroke-linecap="round"/><path d="M147 204 Q141 204 142 209" stroke="#5a5048" stroke-width="3.4" fill="none" opacity=".85" stroke-linecap="round"/><path d="M249 204 Q249 208 247 208" stroke="#2a2018" stroke-width="2.1" fill="none" opacity=".85" stroke-linecap="round"/><path d="M74 192 Q70 192 75 197" stroke="#4a3a28" stroke-width="3.5" fill="none" opacity=".85" stroke-linecap="round"/><path d="M258 209 Q261 210 262 215" stroke="#b07830" stroke-width="1.7" fill="none" opacity=".85" stroke-linecap="round"/><path d="M72 167 Q69 168 70 175" stroke="#c48e42" stroke-width="1.7" fill="none" opacity=".85" stroke-linecap="round"/><path d="M274 187 Q271 185 267 189" stroke="#4a3a28" stroke-width="3.1" fill="none" opacity=".85" stroke-linecap="round"/><path d="M105 162 Q106 168 114 166" stroke="#c48e42" stroke-width="3.2" fill="none" opacity=".85" stroke-linecap="round"/><path d="M124 164 Q123 169 118 168" stroke="#2a2018" stroke-width="2.8" fill="none" opacity=".85" stroke-linecap="round"/><path d="M147 192 Q148 193 154 194" stroke="#b07830" stroke-width="3.1" fill="none" opacity=".85" stroke-linecap="round"/><path d="M177 199 Q181 202 179 203" stroke="#b07830" stroke-width="3.0" fill="none" opacity=".85" stroke-linecap="round"/><path d="M152 202 Q156 203 152 206" stroke="#1c1812" stroke-width="2.2" fill="none" opacity=".85" stroke-linecap="round"/><path d="M169 163 Q174 168 173 165" stroke="#1c1812" stroke-width="3.0" fill="none" opacity=".85" stroke-linecap="round"/><path d="M214 210 Q219 214 216 218" stroke="#1c1812" stroke-width="3.3" fill="none" opacity=".85" stroke-linecap="round"/><path d="M255 181 Q246 185 244 184" stroke="#d8a458" stroke-width="3.4" fill="none" opacity=".85" stroke-linecap="round"/><path d="M67 166 Q73 165 75 168" stroke="#b07830" stroke-width="1.6" fill="none" opacity=".85" stroke-linecap="round"/><path d="M169 177 Q165 184 163 184" stroke="#d8a458" stroke-width="1.8" fill="none" opacity=".85" stroke-linecap="round"/><path d="M172 170 Q173 175 166 174" stroke="#d8a458" stroke-width="3.5" fill="none" opacity=".85" stroke-linecap="round"/><path d="M154 167 Q157 168 155 173" stroke="#1c1812" stroke-width="2.2" fill="none" opacity=".85" stroke-linecap="round"/><path d="M177 208 Q180 208 182 215" stroke="#1c1812" stroke-width="3.4" fill="none" opacity=".85" stroke-linecap="round"/><path d="M219 166 Q219 166 214 167" stroke="#c48e42" stroke-width="1.9" fill="none" opacity=".85" stroke-linecap="round"/><path d="M307 202 Q310 206 318 203" stroke="#9a6a30" stroke-width="2.0" fill="none" opacity=".85" stroke-linecap="round"/><path d="M271 192 Q274 196 272 201" stroke="#d8a458" stroke-width="2.0" fill="none" opacity=".85" stroke-linecap="round"/><path d="M126 160 Q127 162 123 167" stroke="#9a6a30" stroke-width="3.3" fill="none" opacity=".85" stroke-linecap="round"/><path d="M94 200 Q92 203 94 210" stroke="#4a3a28" stroke-width="2.6" fill="none" opacity=".85" stroke-linecap="round"/><path d="M64 194 Q61 198 54 197" stroke="#b07830" stroke-width="2.5" fill="none" opacity=".85" stroke-linecap="round"/><path d="M306 187 Q306 194 304 193" stroke="#d8a458" stroke-width="1.9" fill="none" opacity=".85" stroke-linecap="round"/><path d="M198 181 Q202 181 199 187" stroke="#d8a458" stroke-width="2.4" fill="none" opacity=".85" stroke-linecap="round"/><path d="M139 187 Q137 185 133 190" stroke="#b07830" stroke-width="3.4" fill="none" opacity=".85" stroke-linecap="round"/><path d="M205 189 Q208 191 210 194" stroke="#d8a458" stroke-width="1.7" fill="none" opacity=".85" stroke-linecap="round"/><path d="M190 208 Q186 214 185 218" stroke="#1c1812" stroke-width="2.1" fill="none" opacity=".85" stroke-linecap="round"/><path d="M297 180 Q298 181 301 183" stroke="#c48e42" stroke-width="3.4" fill="none" opacity=".85" stroke-linecap="round"/><path d="M131 165 Q132 167 125 166" stroke="#2a2018" stroke-width="2.5" fill="none" opacity=".85" stroke-linecap="round"/><path d="M236 164 Q244 168 244 168" stroke="#c48e42" stroke-width="3.4" fill="none" opacity=".85" stroke-linecap="round"/><path d="M169 213 Q171 213 173 219" stroke="#c48e42" stroke-width="1.8" fill="none" opacity=".85" stroke-linecap="round"/><path d="M98 198 Q95 198 99 206" stroke="#5a5048" stroke-width="2.8" fill="none" opacity=".85" stroke-linecap="round"/><path d="M251 168 Q253 170 247 171" stroke="#9a6a30" stroke-width="1.6" fill="none" opacity=".85" stroke-linecap="round"/><path d="M156 164 Q150 162 150 164" stroke="#d8a458" stroke-width="1.7" fill="none" opacity=".85" stroke-linecap="round"/><path d="M157 211 Q157 215 149 212" stroke="#c48e42" stroke-width="3.4" fill="none" opacity=".85" stroke-linecap="round"/><path d="M122 178 Q124 183 122 188" stroke="#4a3a28" stroke-width="2.4" fill="none" opacity=".85" stroke-linecap="round"/><path d="M275 183 Q275 189 274 190" stroke="#d8a458" stroke-width="2.4" fill="none" opacity=".85" stroke-linecap="round"/><path d="M111 191 Q109 197 101 196" stroke="#9a6a30" stroke-width="2.1" fill="none" opacity=".85" stroke-linecap="round"/><path d="M140 205 Q142 204 138 210" stroke="#c48e42" stroke-width="2.3" fill="none" opacity=".85" stroke-linecap="round"/><path d="M64 207 Q61 204 54 207" stroke="#4a3a28" stroke-width="2.6" fill="none" opacity=".85" stroke-linecap="round"/><path d="M196 183 Q196 186 195 187" stroke="#4a3a28" stroke-width="2.4" fill="none" opacity=".85" stroke-linecap="round"/><path d="M209 197 Q209 199 203 205" stroke="#4a3a28" stroke-width="3.2" fill="none" opacity=".85" stroke-linecap="round"/><path d="M306 173 Q304 175 306 178" stroke="#4a3a28" stroke-width="3.0" fill="none" opacity=".85" stroke-linecap="round"/><path d="M127 165 Q125 167 122 169" stroke="#9a6a30" stroke-width="3.5" fill="none" opacity=".85" stroke-linecap="round"/><path d="M216 162 Q215 163 209 165" stroke="#d8a458" stroke-width="1.6" fill="none" opacity=".85" stroke-linecap="round"/><path d="M307 179 Q310 183 306 184" stroke="#2a2018" stroke-width="2.4" fill="none" opacity=".85" stroke-linecap="round"/><path d="M151 175 Q154 175 153 182" stroke="#4a3a28" stroke-width="3.3" fill="none" opacity=".85" stroke-linecap="round"/><path d="M185 176 Q183 175 189 177" stroke="#c48e42" stroke-width="1.8" fill="none" opacity=".85" stroke-linecap="round"/><path d="M131 160 Q130 163 124 162" stroke="#b07830" stroke-width="3.0" fill="none" opacity=".85" stroke-linecap="round"/><path d="M290 183 Q291 183 298 186" stroke="#5a5048" stroke-width="1.9" fill="none" opacity=".85" stroke-linecap="round"/><path d="M199 165 Q196 162 194 166" stroke="#5a5048" stroke-width="1.6" fill="none" opacity=".85" stroke-linecap="round"/><path d="M270 168 Q274 169 272 174" stroke="#5a5048" stroke-width="2.7" fill="none" opacity=".85" stroke-linecap="round"/><path d="M132 194 Q130 200 124 197" stroke="#2a2018" stroke-width="2.4" fill="none" opacity=".85" stroke-linecap="round"/><path d="M77 159 Q76 161 78 166" stroke="#2a2018" stroke-width="3.2" fill="none" opacity=".85" stroke-linecap="round"/><path d="M207 208 Q208 213 209 213" stroke="#2a2018" stroke-width="1.6" fill="none" opacity=".85" stroke-linecap="round"/><path d="M188 171 Q196 173 197 177" stroke="#b07830" stroke-width="3.1" fill="none" opacity=".85" stroke-linecap="round"/><path d="M147 184 Q151 188 155 191" stroke="#d8a458" stroke-width="2.2" fill="none" opacity=".85" stroke-linecap="round"/><path d="M152 187 Q151 191 146 190" stroke="#1c1812" stroke-width="2.4" fill="none" opacity=".85" stroke-linecap="round"/><path d="M219 186 Q220 192 227 191" stroke="#2a2018" stroke-width="3.4" fill="none" opacity=".85" stroke-linecap="round"/><path d="M160 170 Q166 172 165 170" stroke="#b07830" stroke-width="2.0" fill="none" opacity=".85" stroke-linecap="round"/><path d="M244 171 Q244 175 249 175" stroke="#d8a458" stroke-width="2.0" fill="none" opacity=".85" stroke-linecap="round"/><path d="M146 164 Q148 165 147 170" stroke="#9a6a30" stroke-width="2.0" fill="none" opacity=".85" stroke-linecap="round"/><path d="M229 192 Q227 191 225 196" stroke="#5a5048" stroke-width="2.7" fill="none" opacity=".85" stroke-linecap="round"/><path d="M136 179 Q136 179 136 183" stroke="#b07830" stroke-width="2.5" fill="none" opacity=".85" stroke-linecap="round"/><path d="M286 196 Q288 198 282 199" stroke="#b07830" stroke-width="2.2" fill="none" opacity=".85" stroke-linecap="round"/><path d="M105 198 Q103 203 101 203" stroke="#4a3a28" stroke-width="1.7" fill="none" opacity=".85" stroke-linecap="round"/><path d="M180 188 Q180 194 182 198" stroke="#b07830" stroke-width="1.6" fill="none" opacity=".85" stroke-linecap="round"/><path d="M217 197 Q219 205 214 208" stroke="#d8a458" stroke-width="2.6" fill="none" opacity=".85" stroke-linecap="round"/><path d="M249 174 Q246 173 246 178" stroke="#4a3a28" stroke-width="2.3" fill="none" opacity=".85" stroke-linecap="round"/><path d="M134 169 Q130 174 128 176" stroke="#4a3a28" stroke-width="2.6" fill="none" opacity=".85" stroke-linecap="round"/><path d="M103 180 Q101 183 105 185" stroke="#4a3a28" stroke-width="1.7" fill="none" opacity=".85" stroke-linecap="round"/><path d="M111 186 Q116 187 116 188" stroke="#2a2018" stroke-width="3.3" fill="none" opacity=".85" stroke-linecap="round"/><path d="M160 162 Q165 164 163 167" stroke="#d8a458" stroke-width="1.7" fill="none" opacity=".85" stroke-linecap="round"/><path d="M169 173 Q172 174 178 179" stroke="#1c1812" stroke-width="2.8" fill="none" opacity=".85" stroke-linecap="round"/><path d="M148 177 Q143 178 143 179" stroke="#9a6a30" stroke-width="3.0" fill="none" opacity=".85" stroke-linecap="round"/><path d="M306 176 Q310 178 314 181" stroke="#b07830" stroke-width="2.0" fill="none" opacity=".85" stroke-linecap="round"/><path d="M279 200 Q277 201 275 206" stroke="#5a5048" stroke-width="3.5" fill="none" opacity=".85" stroke-linecap="round"/><path d="M129 208 Q129 211 134 209" stroke="#5a5048" stroke-width="2.8" fill="none" opacity=".85" stroke-linecap="round"/><path d="M187 211 Q185 216 181 219" stroke="#4a3a28" stroke-width="2.0" fill="none" opacity=".85" stroke-linecap="round"/><path d="M303 178 Q307 177 307 181" stroke="#2a2018" stroke-width="2.5" fill="none" opacity=".85" stroke-linecap="round"/><path d="M197 195 Q197 199 204 199" stroke="#9a6a30" stroke-width="1.7" fill="none" opacity=".85" stroke-linecap="round"/><path d="M84 197 Q85 201 84 205" stroke="#b07830" stroke-width="2.6" fill="none" opacity=".85" stroke-linecap="round"/><path d="M104 204 Q99 206 102 208" stroke="#5a5048" stroke-width="1.8" fill="none" opacity=".85" stroke-linecap="round"/><path d="M143 212 Q141 217 139 215" stroke="#5a5048" stroke-width="1.5" fill="none" opacity=".85" stroke-linecap="round"/><path d="M242 193 Q242 195 247 198" stroke="#c48e42" stroke-width="2.2" fill="none" opacity=".85" stroke-linecap="round"/><path d="M84 176 Q80 176 83 184" stroke="#1c1812" stroke-width="2.1" fill="none" opacity=".85" stroke-linecap="round"/><path d="M145 169 Q150 172 151 175" stroke="#5a5048" stroke-width="2.8" fill="none" opacity=".85" stroke-linecap="round"/><path d="M167 175 Q169 180 164 178" stroke="#2a2018" stroke-width="2.1" fill="none" opacity=".85" stroke-linecap="round"/><path d="M97 187 Q101 187 97 193" stroke="#1c1812" stroke-width="2.2" fill="none" opacity=".85" stroke-linecap="round"/><path d="M186 185 Q179 187 180 186" stroke="#5a5048" stroke-width="1.5" fill="none" opacity=".85" stroke-linecap="round"/><path d="M75 186 Q77 186 82 187" stroke="#4a3a28" stroke-width="2.9" fill="none" opacity=".85" stroke-linecap="round"/><path d="M136 175 Q136 174 134 180" stroke="#2a2018" stroke-width="2.3" fill="none" opacity=".85" stroke-linecap="round"/><path d="M232 171 Q229 175 233 176" stroke="#9a6a30" stroke-width="2.8" fill="none" opacity=".85" stroke-linecap="round"/><path d="M189 212 Q190 214 193 213" stroke="#b07830" stroke-width="3.4" fill="none" opacity=".85" stroke-linecap="round"/><path d="M201 180 Q200 184 199 187" stroke="#c48e42" stroke-width="2.1" fill="none" opacity=".85" stroke-linecap="round"/><path d="M258 200 Q265 201 263 202" stroke="#d8a458" stroke-width="3.0" fill="none" opacity=".85" stroke-linecap="round"/><path d="M111 177 Q111 176 114 180" stroke="#c48e42" stroke-width="2.7" fill="none" opacity=".85" stroke-linecap="round"/><path d="M85 168 Q86 170 90 173" stroke="#5a5048" stroke-width="2.6" fill="none" opacity=".85" stroke-linecap="round"/><path d="M70 199 Q70 201 74 207" stroke="#5a5048" stroke-width="2.0" fill="none" opacity=".85" stroke-linecap="round"/><path d="M110 192 Q106 195 104 198" stroke="#2a2018" stroke-width="2.7" fill="none" opacity=".85" stroke-linecap="round"/><path d="M187 189 Q189 197 187 198" stroke="#c48e42" stroke-width="2.8" fill="none" opacity=".85" stroke-linecap="round"/><path d="M109 208 Q106 209 103 215" stroke="#9a6a30" stroke-width="2.3" fill="none" opacity=".85" stroke-linecap="round"/><path d="M86 170 Q85 172 85 180" stroke="#9a6a30" stroke-width="3.3" fill="none" opacity=".85" stroke-linecap="round"/><path d="M114 204 Q112 208 118 210" stroke="#b07830" stroke-width="2.5" fill="none" opacity=".85" stroke-linecap="round"/><path d="M209 177 Q209 183 215 182" stroke="#2a2018" stroke-width="2.1" fill="none" opacity=".85" stroke-linecap="round"/><path d="M121 170 Q124 172 129 177" stroke="#2a2018" stroke-width="2.2" fill="none" opacity=".85" stroke-linecap="round"/><path d="M197 189 Q195 190 197 196" stroke="#d8a458" stroke-width="3.1" fill="none" opacity=".85" stroke-linecap="round"/><path d="M130 191 Q136 198 135 199" stroke="#d8a458" stroke-width="1.8" fill="none" opacity=".85" stroke-linecap="round"/><path d="M290 189 Q290 192 291 194" stroke="#c48e42" stroke-width="2.6" fill="none" opacity=".85" stroke-linecap="round"/><path d="M269 187 Q268 193 274 192" stroke="#4a3a28" stroke-width="2.8" fill="none" opacity=".85" stroke-linecap="round"/><path d="M160 177 Q160 178 158 186" stroke="#d8a458" stroke-width="3.0" fill="none" opacity=".85" stroke-linecap="round"/><path d="M104 176 Q105 179 110 181" stroke="#c48e42" stroke-width="1.7" fill="none" opacity=".85" stroke-linecap="round"/><path d="M163 177 Q160 176 163 183" stroke="#b07830" stroke-width="3.5" fill="none" opacity=".85" stroke-linecap="round"/><path d="M257 179 Q259 181 264 186" stroke="#1c1812" stroke-width="3.2" fill="none" opacity=".85" stroke-linecap="round"/><path d="M152 159 Q149 159 153 166" stroke="#b07830" stroke-width="2.6" fill="none" opacity=".85" stroke-linecap="round"/><path d="M137 171 Q137 173 133 178" stroke="#9a6a30" stroke-width="1.9" fill="none" opacity=".85" stroke-linecap="round"/><path d="M80 188 Q72 190 71 193" stroke="#c48e42" stroke-width="3.5" fill="none" opacity=".85" stroke-linecap="round"/><path d="M87 200 Q86 206 82 205" stroke="#c48e42" stroke-width="3.5" fill="none" opacity=".85" stroke-linecap="round"/><path d="M198 163 Q200 161 208 165" stroke="#2a2018" stroke-width="1.9" fill="none" opacity=".85" stroke-linecap="round"/><path d="M144 203 Q148 203 145 207" stroke="#2a2018" stroke-width="2.5" fill="none" opacity=".85" stroke-linecap="round"/><path d="M238 200 Q236 204 231 205" stroke="#c48e42" stroke-width="3.2" fill="none" opacity=".85" stroke-linecap="round"/><path d="M64 200 Q62 204 60 206" stroke="#4a3a28" stroke-width="2.4" fill="none" opacity=".85" stroke-linecap="round"/><path d="M94 199 Q92 201 86 203" stroke="#d8a458" stroke-width="1.7" fill="none" opacity=".85" stroke-linecap="round"/><path d="M144 203 Q140 206 139 205" stroke="#4a3a28" stroke-width="2.1" fill="none" opacity=".85" stroke-linecap="round"/><path d="M103 179 Q103 185 105 184" stroke="#d8a458" stroke-width="2.7" fill="none" opacity=".85" stroke-linecap="round"/><path d="M169 170 Q166 173 171 174" stroke="#4a3a28" stroke-width="2.4" fill="none" opacity=".85" stroke-linecap="round"/><path d="M194 204 Q193 208 188 206" stroke="#b07830" stroke-width="3.1" fill="none" opacity=".85" stroke-linecap="round"/><path d="M312 163 Q305 168 304 168" stroke="#b07830" stroke-width="2.3" fill="none" opacity=".85" stroke-linecap="round"/><path d="M240 212 Q245 213 247 219" stroke="#9a6a30" stroke-width="3.4" fill="none" opacity=".85" stroke-linecap="round"/><path d="M230 165 Q232 166 236 168" stroke="#2a2018" stroke-width="1.5" fill="none" opacity=".85" stroke-linecap="round"/><path d="M71 202 Q73 208 75 207" stroke="#b07830" stroke-width="2.7" fill="none" opacity=".85" stroke-linecap="round"/><path d="M191 177 Q187 182 190 182" stroke="#4a3a28" stroke-width="3.3" fill="none" opacity=".85" stroke-linecap="round"/><path d="M105 185 Q106 188 111 188" stroke="#4a3a28" stroke-width="2.7" fill="none" opacity=".85" stroke-linecap="round"/><path d="M220 161 Q222 163 227 168" stroke="#4a3a28" stroke-width="1.8" fill="none" opacity=".85" stroke-linecap="round"/><path d="M277 204 Q280 205 284 207" stroke="#5a5048" stroke-width="2.8" fill="none" opacity=".85" stroke-linecap="round"/><path d="M162 159 Q156 160 155 165" stroke="#2a2018" stroke-width="3.5" fill="none" opacity=".85" stroke-linecap="round"/><path d="M91 168 Q99 172 100 171" stroke="#c48e42" stroke-width="2.3" fill="none" opacity=".85" stroke-linecap="round"/><path d="M233 205 Q238 206 236 209" stroke="#4a3a28" stroke-width="1.9" fill="none" opacity=".85" stroke-linecap="round"/><path d="M164 159 Q166 161 162 165" stroke="#1c1812" stroke-width="3.0" fill="none" opacity=".85" stroke-linecap="round"/><path d="M150 192 Q144 192 144 194" stroke="#c48e42" stroke-width="2.0" fill="none" opacity=".85" stroke-linecap="round"/><path d="M95 207 Q88 213 87 214" stroke="#b07830" stroke-width="3.3" fill="none" opacity=".85" stroke-linecap="round"/><path d="M270 213 Q268 221 273 222" stroke="#1c1812" stroke-width="2.3" fill="none" opacity=".85" stroke-linecap="round"/><path d="M227 178 Q232 179 233 185" stroke="#5a5048" stroke-width="2.8" fill="none" opacity=".85" stroke-linecap="round"/><path d="M147 162 Q147 168 152 171" stroke="#d8a458" stroke-width="3.0" fill="none" opacity=".85" stroke-linecap="round"/><path d="M160 204 Q164 206 167 209" stroke="#1c1812" stroke-width="2.2" fill="none" opacity=".85" stroke-linecap="round"/><path d="M223 200 Q229 205 234 204" stroke="#c48e42" stroke-width="2.8" fill="none" opacity=".85" stroke-linecap="round"/><path d="M68 202 Q66 208 66 210" stroke="#d8a458" stroke-width="2.1" fill="none" opacity=".85" stroke-linecap="round"/><path d="M93 209 Q89 211 88 209" stroke="#5a5048" stroke-width="2.0" fill="none" opacity=".85" stroke-linecap="round"/><path d="M208 202 Q211 204 214 206" stroke="#4a3a28" stroke-width="1.5" fill="none" opacity=".85" stroke-linecap="round"/><path d="M75 182 Q71 187 71 191" stroke="#4a3a28" stroke-width="2.3" fill="none" opacity=".85" stroke-linecap="round"/><path d="M208 206 Q212 206 214 210" stroke="#d8a458" stroke-width="2.4" fill="none" opacity=".85" stroke-linecap="round"/><path d="M77 171 Q81 173 82 177" stroke="#1c1812" stroke-width="2.7" fill="none" opacity=".85" stroke-linecap="round"/><path d="M163 214 Q169 210 173 214" stroke="#1c1812" stroke-width="2.7" fill="none" opacity=".85" stroke-linecap="round"/><path d="M149 188 Q147 189 151 192" stroke="#b07830" stroke-width="1.5" fill="none" opacity=".85" stroke-linecap="round"/><path d="M156 208 Q161 208 165 212" stroke="#2a2018" stroke-width="2.9" fill="none" opacity=".85" stroke-linecap="round"/><path d="M270 169 Q273 171 277 171" stroke="#4a3a28" stroke-width="1.6" fill="none" opacity=".85" stroke-linecap="round"/><path d="M96 171 Q95 173 98 178" stroke="#c48e42" stroke-width="3.3" fill="none" opacity=".85" stroke-linecap="round"/><path d="M230 207 Q236 207 237 211" stroke="#c48e42" stroke-width="2.4" fill="none" opacity=".85" stroke-linecap="round"/><path d="M87 168 Q85 167 82 168" stroke="#4a3a28" stroke-width="2.9" fill="none" opacity=".85" stroke-linecap="round"/><path d="M66 163 Q69 167 67 169" stroke="#2a2018" stroke-width="2.3" fill="none" opacity=".85" stroke-linecap="round"/><path d="M213 167 Q208 171 205 170" stroke="#d8a458" stroke-width="1.7" fill="none" opacity=".85" stroke-linecap="round"/><path d="M285 213 Q289 212 287 217" stroke="#1c1812" stroke-width="2.6" fill="none" opacity=".85" stroke-linecap="round"/><path d="M79 185 Q86 191 88 190" stroke="#4a3a28" stroke-width="3.1" fill="none" opacity=".85" stroke-linecap="round"/><path d="M178 197 Q175 199 173 200" stroke="#2a2018" stroke-width="3.1" fill="none" opacity=".85" stroke-linecap="round"/><path d="M65 178 Q65 181 69 180" stroke="#2a2018" stroke-width="1.6" fill="none" opacity=".85" stroke-linecap="round"/><path d="M309 193 Q304 199 301 199" stroke="#5a5048" stroke-width="1.6" fill="none" opacity=".85" stroke-linecap="round"/><path d="M149 194 Q148 193 145 197" stroke="#d8a458" stroke-width="2.6" fill="none" opacity=".85" stroke-linecap="round"/><path d="M125 197 Q127 200 122 201" stroke="#2a2018" stroke-width="2.3" fill="none" opacity=".85" stroke-linecap="round"/><path d="M298 187 Q297 191 293 195" stroke="#1c1812" stroke-width="1.9" fill="none" opacity=".85" stroke-linecap="round"/><path d="M300 194 Q300 197 297 198" stroke="#9a6a30" stroke-width="1.8" fill="none" opacity=".85" stroke-linecap="round"/><path d="M202 172 Q202 175 203 179" stroke="#5a5048" stroke-width="2.7" fill="none" opacity=".85" stroke-linecap="round"/><path d="M202 213 Q201 216 196 218" stroke="#d8a458" stroke-width="1.7" fill="none" opacity=".85" stroke-linecap="round"/><path d="M140 164 Q141 166 143 174" stroke="#5a5048" stroke-width="2.0" fill="none" opacity=".85" stroke-linecap="round"/><path d="M118 205 Q115 208 110 209" stroke="#9a6a30" stroke-width="3.2" fill="none" opacity=".85" stroke-linecap="round"/><path d="M113 183 Q110 180 109 184" stroke="#d8a458" stroke-width="2.9" fill="none" opacity=".85" stroke-linecap="round"/><path d="M284 198 Q284 204 285 203" stroke="#5a5048" stroke-width="2.7" fill="none" opacity=".85" stroke-linecap="round"/><path d="M258 167 Q254 170 254 167" stroke="#5a5048" stroke-width="2.4" fill="none" opacity=".85" stroke-linecap="round"/><path d="M232 194 Q230 198 231 199" stroke="#4a3a28" stroke-width="2.8" fill="none" opacity=".85" stroke-linecap="round"/><path d="M224 191 Q223 197 218 196" stroke="#1c1812" stroke-width="2.3" fill="none" opacity=".85" stroke-linecap="round"/><path d="M282 211 Q280 213 285 214" stroke="#4a3a28" stroke-width="2.7" fill="none" opacity=".85" stroke-linecap="round"/><path d="M62 206 Q57 206 56 207" stroke="#9a6a30" stroke-width="2.8" fill="none" opacity=".85" stroke-linecap="round"/><path d="M186 162 Q188 165 193 169" stroke="#c48e42" stroke-width="2.0" fill="none" opacity=".85" stroke-linecap="round"/><path d="M199 181 Q203 185 204 190" stroke="#b07830" stroke-width="2.8" fill="none" opacity=".85" stroke-linecap="round"/><path d="M271 204 Q267 202 266 205" stroke="#4a3a28" stroke-width="2.2" fill="none" opacity=".85" stroke-linecap="round"/><path d="M280 183 Q286 184 286 186" stroke="#1c1812" stroke-width="1.7" fill="none" opacity=".85" stroke-linecap="round"/><path d="M137 184 Q142 188 142 186" stroke="#2a2018" stroke-width="1.9" fill="none" opacity=".85" stroke-linecap="round"/><path d="M202 172 Q208 177 210 178" stroke="#9a6a30" stroke-width="3.5" fill="none" opacity=".85" stroke-linecap="round"/><path d="M192 197 Q199 197 201 203" stroke="#4a3a28" stroke-width="3.1" fill="none" opacity=".85" stroke-linecap="round"/><path d="M275 180 Q273 185 271 183" stroke="#d8a458" stroke-width="1.6" fill="none" opacity=".85" stroke-linecap="round"/><path d="M144 175 Q146 177 146 184" stroke="#2a2018" stroke-width="3.2" fill="none" opacity=".85" stroke-linecap="round"/><path d="M233 190 Q234 198 232 198" stroke="#d8a458" stroke-width="2.9" fill="none" opacity=".85" stroke-linecap="round"/><path d="M264 185 Q262 186 264 189" stroke="#9a6a30" stroke-width="2.2" fill="none" opacity=".85" stroke-linecap="round"/><path d="M270 173 Q273 175 276 182" stroke="#d8a458" stroke-width="1.9" fill="none" opacity=".85" stroke-linecap="round"/><path d="M97 187 Q100 190 97 194" stroke="#1c1812" stroke-width="2.9" fill="none" opacity=".85" stroke-linecap="round"/><path d="M239 202 Q240 199 233 203" stroke="#2a2018" stroke-width="2.0" fill="none" opacity=".85" stroke-linecap="round"/><path d="M95 159 Q91 162 88 162" stroke="#d8a458" stroke-width="1.9" fill="none" opacity=".85" stroke-linecap="round"/><path d="M287 165 Q281 167 281 169" stroke="#9a6a30" stroke-width="2.9" fill="none" opacity=".85" stroke-linecap="round"/><path d="M121 176 Q116 177 114 177" stroke="#5a5048" stroke-width="2.0" fill="none" opacity=".85" stroke-linecap="round"/></g><path d="M140 96 Q139 132 152 154 Q166 176 183 177 Q201 175 213 155 Q227 131 226 96 Q223 80 212 77 Q190 84 170 90 Q152 94 147 92 Q141 92 140 96 Z" fill="url(#fg)"/><ellipse cx="139" cy="116" rx="4" ry="9" fill="#a09084"/><ellipse cx="227" cy="112" rx="4" ry="9" fill="#a09084"/><path d="M135 120 Q130 82 145 61 Q161 42 184 43 Q209 44 223 61 Q233 76 230 102 Q228 110 225 114 Q221 93 213 77 Q194 84 174 90 Q158 95 147 92 Q142 104 141 122 Z" fill="#1d1f1c"/><path d="M151 103 Q160 99 170 102 M190 101 Q200 98 210 102" stroke="#3a302a" stroke-width="2.2" fill="none" stroke-linecap="round"/><path d="M153 114 Q160 110 167 114 Q160 117 153 114Z M191 113 Q198 109 205 113 Q198 116 191 113Z" fill="#2e2622"/><path d="M152 118 Q160 122 168 118 M190 117 Q198 121 206 117" stroke="#9a8a80" stroke-width="1.2" fill="none"/><path d="M179 112 Q176 130 172 138 Q178 143 186 142 Q192 140 190 136" stroke="#8f7f74" stroke-width="1.4" fill="none"/><path d="M166 153 Q180 148 196 152 Q182 160 166 153Z" fill="#7d6860"/><path d="M170 153 Q181 151 192 152" stroke="#e0d6d0" stroke-width="1" fill="none"/><rect x="0" y="189" width="143" height="25" fill="#000" opacity=".55"/><rect x="4" y="204" width="3" height="5" fill="#fff"/><rect x="8.5" y="200" width="3" height="9" fill="#fff"/><rect x="13" y="196" width="3" height="13" fill="#fff"/><rect x="17.5" y="192" width="3" height="17" fill="#fff" opacity=".9"/><rect x="298" y="202.5" width="27" height="2.5" fill="#f0d84a"/><text x="327" y="206" font-family="Liberation Sans" font-size="5" fill="#fff" opacity=".7">www.pajak.go.id</text></svg>
<div class="t" style="left:29px;top:195px;font-size:15px;color:#f4f4f4">Penyuluhan 727</div>
</div>
<div class="a" style="left:1524px;top:508px;width:1.5px;height:33px;background:#8a8a8a"></div>
<div class="a" style="left:1529px;top:508px;width:1.5px;height:33px;background:#8a8a8a"></div>
<svg class="a" style="left:42px;top:961px;" width="30" height="30" viewBox="0 0 30 30"><rect x="10" y="2" width="10" height="16" rx="5" fill="#c8c8c8"/><path d="M6 13 Q6 22 15 22 Q24 22 24 13" fill="none" stroke="#c8c8c8" stroke-width="2"/><path d="M15 22 V27 M10 27.5 H20" stroke="#c8c8c8" stroke-width="2"/><path d="M2.5 28.5 L27.5 2" stroke="#e0403a" stroke-width="2"/></svg>
<svg class="a" style="left:90.7px;top:972px;" width="12" height="8" viewBox="0 0 12 8"><path d="M2 6.5 L6 2.5 L10 6.5" fill="none" stroke="#cfcfcf" stroke-width="1.6"/></svg>
<div class="t" style="left:-22px;top:998.3px;width:160px;text-align:center;font-size:15px;color:#d2d2d2">Unmute</div>
<svg class="a" style="left:158px;top:965px;" width="32" height="22" viewBox="0 0 32 22"><rect x="1" y="2" width="20" height="18" rx="4" fill="#c8c8c8"/><path d="M22 8 L30 3 V19 L22 14Z" fill="#c8c8c8"/></svg>
<svg class="a" style="left:214px;top:972px;" width="12" height="8" viewBox="0 0 12 8"><path d="M2 6.5 L6 2.5 L10 6.5" fill="none" stroke="#cfcfcf" stroke-width="1.6"/></svg>
<div class="t" style="left:94.5px;top:998.3px;width:160px;text-align:center;font-size:15px;color:#d2d2d2">Stop Video</div>
<svg class="a" style="left:547px;top:964px;" width="32" height="25" viewBox="0 0 32 25"><circle cx="10" cy="6.5" r="5.5" fill="#c8c8c8"/><path d="M0.5 22 Q0.5 13 10 13 Q19.5 13 19.5 22 V24 H0.5Z" fill="#c8c8c8"/><circle cx="22.5" cy="8" r="4.8" fill="#c8c8c8"/><path d="M18 15 Q22 13 26 14 Q31 16 31 22 V24 H21 V20 Q21 17 18 15Z" fill="#c8c8c8"/></svg>
<div class="t" style="left:584.0px;top:964.9px;font-size:15.2px;color:#d2d2d2">84</div>
<svg class="a" style="left:622.3px;top:972px;" width="12" height="8" viewBox="0 0 12 8"><path d="M2 6.5 L6 2.5 L10 6.5" fill="none" stroke="#cfcfcf" stroke-width="1.6"/></svg>
<div class="t" style="left:483px;top:998.3px;width:160px;text-align:center;font-size:15px;color:#d2d2d2">Participants</div>
<svg class="a" style="left:687px;top:963px;" width="28" height="26" viewBox="0 0 28 26"><path d="M4 1 H24 Q27 1 27 4 V16 Q27 19 24 19 H12 L6 24.5 V19 H4 Q1 19 1 16 V4 Q1 1 4 1Z" fill="#c8c8c8"/></svg>
<svg class="a" style="left:735.7px;top:972px;" width="12" height="8" viewBox="0 0 12 8"><path d="M2 6.5 L6 2.5 L10 6.5" fill="none" stroke="#cfcfcf" stroke-width="1.6"/></svg>
<div class="t" style="left:621.5px;top:998.3px;width:160px;text-align:center;font-size:15px;color:#d2d2d2">Chat</div>
<svg class="a" style="left:803px;top:964px;" width="32" height="24" viewBox="0 0 32 24"><rect x="1" y="1" width="30" height="22" rx="3" fill="#22c54f"/><path d="M16 18 V7 M11 11.5 L16 6.5 L21 11.5" fill="none" stroke="#0e1a0e" stroke-width="2.4"/></svg>
<div class="t" style="left:739.2px;top:998.3px;width:160px;text-align:center;font-size:15px;color:#2fcd5b">Share Screen</div>
<svg class="a" style="left:917px;top:962px;" width="28" height="28" viewBox="0 0 28 28"><circle cx="14" cy="14" r="12" fill="none" stroke="#c8c8c8" stroke-width="2"/><circle cx="14" cy="14" r="9" fill="#c8c8c8"/></svg>
<div class="t" style="left:850.5px;top:998.3px;width:160px;text-align:center;font-size:15px;color:#d2d2d2">Record</div>
<svg class="a" style="left:1025px;top:964px;" width="32" height="24" viewBox="0 0 32 24"><rect x="1" y="1" width="30" height="22" rx="3" fill="#c8c8c8"/><text x="16" y="17" text-anchor="middle" font-family="Liberation Sans" font-weight="bold" font-size="13" fill="#1f1f1f">CC</text></svg>
<svg class="a" style="left:1079px;top:972px;" width="12" height="8" viewBox="0 0 12 8"><path d="M2 6.5 L6 2.5 L10 6.5" fill="none" stroke="#cfcfcf" stroke-width="1.6"/></svg>
<div class="t" style="left:961px;top:998.3px;width:160px;text-align:center;font-size:15px;color:#d2d2d2">Show Captions</div>
<svg class="a" style="left:1138px;top:959px;" width="30" height="30" viewBox="0 0 30 30"><circle cx="12.5" cy="17.5" r="11.5" fill="#c8c8c8"/><circle cx="8.5" cy="15.5" r="1.6" fill="#1a1a1a"/><circle cx="16.5" cy="15.5" r="1.6" fill="#1a1a1a"/><path d="M7.5 20 Q12.5 25 17.5 20" fill="none" stroke="#1a1a1a" stroke-width="1.8"/><path d="M23 1.5 V10.5 M18.5 6 H27.5" stroke="#c8c8c8" stroke-width="1.8"/></svg>
<div class="t" style="left:1070.8px;top:998.3px;width:160px;text-align:center;font-size:15px;color:#d2d2d2">Reactions</div>
<svg class="a" style="left:1240px;top:966px;" width="23" height="23" viewBox="0 0 23 23"><path d="M9 2 H5 Q2 2 2 5 V9 M21 14 V18 Q21 21 18 21 H14" fill="none" stroke="#c8c8c8" stroke-width="2.2"/><circle cx="17" cy="6" r="3.6" fill="none" stroke="#c8c8c8" stroke-width="2.2"/><circle cx="6" cy="17" r="3.6" fill="none" stroke="#c8c8c8" stroke-width="2.2"/></svg>
<div class="t" style="left:1171.2px;top:998.3px;width:160px;text-align:center;font-size:15px;color:#d2d2d2">Apps</div>
<svg class="a" style="left:1348px;top:963px;" width="28" height="24" viewBox="0 0 28 24"><path d="M10 19 H5 Q2 19 2 16 V5 Q2 2 5 2 H23 Q26 2 26 5 V13" fill="none" stroke="#c8c8c8" stroke-width="2.2"/><rect x="12" y="16" width="15" height="6" rx="3" fill="#c8c8c8"/></svg>
<div class="t" style="left:1282.5px;top:998.3px;width:160px;text-align:center;font-size:15px;color:#d2d2d2">Whiteboards</div>
<svg class="a" style="left:1474px;top:963px;" width="25" height="28" viewBox="0 0 25 28"><rect x="4" y="2" width="17" height="22" rx="3" fill="none" stroke="#c8c8c8" stroke-width="2.2"/><path d="M8.5 8 H16.5 M8.5 12 H16.5 M8.5 16 H13" stroke="#c8c8c8" stroke-width="1.8"/><path d="M1.5 7 H4.5 M1.5 11 H4.5 M1.5 15 H4.5 M1.5 19 H4.5" stroke="#c8c8c8" stroke-width="1.5"/><rect x="12" y="21" width="12" height="5.5" rx="2.7" fill="#c8c8c8"/></svg>
<div class="t" style="left:1405px;top:998.3px;width:160px;text-align:center;font-size:15px;color:#d2d2d2">Notes</div>
<div class="a" style="left:1828px;top:971px;width:77px;height:33px;background:#c4262e;border-radius:8px"></div>
<div class="t" style="left:1846.5px;top:979.8px;font-size:15.2px;color:#fff;font-weight:bold">Leave</div>
</body></html>
